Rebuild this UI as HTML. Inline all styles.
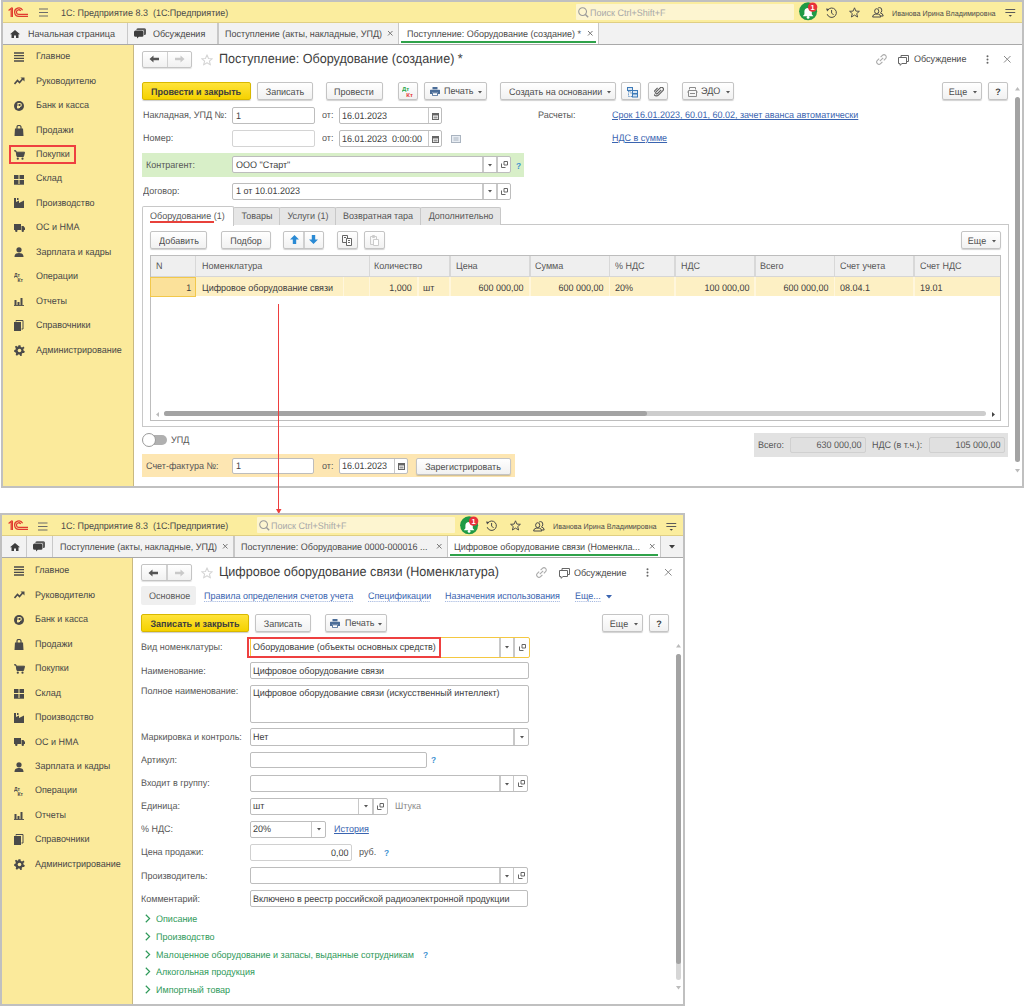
<!DOCTYPE html><html><head><meta charset="utf-8"><style>html,body{margin:0;padding:0;background:#fff;width:1024px;height:1006px;overflow:hidden;position:relative;font-family:"Liberation Sans",sans-serif}</style></head><body>
<div style="position:absolute;left:0px;top:0px;width:1024px;height:488px;background:#fff"></div>
<div style="position:absolute;left:1px;top:0px;width:1023px;height:2px;background:#c0c0c0"></div>
<div style="position:absolute;left:1px;top:0px;width:2px;height:488px;background:#c0c0c0"></div>
<div style="position:absolute;left:1022px;top:0px;width:2px;height:488px;background:#c0c0c0"></div>
<div style="position:absolute;left:1px;top:486px;width:1023px;height:2px;background:#c0c0c0"></div>
<div style="position:absolute;left:3px;top:2px;width:1019px;height:21px;background:#fbed9e"></div>
<div style="position:absolute;left:3px;top:22px;width:1019px;height:1px;background:#e0cf83"></div>
<svg style="position:absolute;left:7.75px;top:6.8px" width="21" height="11" viewBox="0 0 21 11"><g fill="none" stroke="#e03a2f" stroke-width="1.25"><path d="M0.6 3.4L3.2 1.3V10"/><path d="M4.4 .6V10"/><path d="M14.6 3.3A4.2 4.2 0 1 0 10.8 9.4H20"/><path d="M12.7 3.9A2.3 2.3 0 1 0 10.8 7.4H20"/></g></svg>
<svg style="position:absolute;left:38.75px;top:8.3px" width="9.5" height="9" viewBox="0 0 9.5 9"><g stroke="#6b6b6b" stroke-width="1.2"><path d="M0 1H9.5M0 4.5H9.5M0 8H9.5"/></g></svg>
<div style="position:absolute;left:61.25px;top:7.78px;font-size:9.495px;line-height:11.869px;color:#4a4a4a;font-weight:400;white-space:nowrap;;transform:scaleX(0.9479);text-rendering:geometricPrecision;transform-origin:0 0">1С: Предприятие 8.3&nbsp; (1С:Предприятие)</div>
<div style="position:absolute;left:576px;top:4px;width:218px;height:16px;background:#fdf5d0;border-radius:1px"></div>
<svg style="position:absolute;left:578.3px;top:7px" width="11" height="11" viewBox="0 0 11 11"><circle cx="4.6" cy="4.6" r="3.9" fill="none" stroke="#9a9a9a" stroke-width="1.05"/><path d="M7.4 7.4L10.2 10.2" stroke="#9a9a9a" stroke-width="1.4"/></svg>
<div style="position:absolute;left:590.1px;top:8.08px;font-size:9.495px;line-height:11.869px;color:#a8a8a8;font-weight:400;white-space:nowrap;;transform:scaleX(0.9479);text-rendering:geometricPrecision;transform-origin:0 0">Поиск Ctrl+Shift+F</div>
<svg style="position:absolute;left:799px;top:2.3px" width="20" height="20" viewBox="0 0 20 20"><circle cx="9.1" cy="9.3" r="9" fill="#1f9a45"/><path d="M3.8 14.2H14.4L12.8 12.3V9.6A3.7 3.7 0 0 0 5.4 9.6V12.3Z" fill="#fff"/><circle cx="9.1" cy="15.4" r="1.4" fill="#fff"/><circle cx="13.6" cy="5.1" r="4.7" fill="#e8303a"/><text x="13.6" y="7.7" font-size="7.5" font-weight="700" fill="#fff" text-anchor="middle" font-family="Liberation Sans">1</text></svg>
<svg style="position:absolute;left:826px;top:7.0px" width="12" height="12" viewBox="0 0 12 12"><g fill="none" stroke="#4a4a4a" stroke-width="1"><path d="M1.9 2.9A4.7 4.7 0 1 1 1.2 7.2"/><path d="M5.6 3V6L7.6 8"/></g><path d="M0 1.6L3.4 2.1L1.2 4.6Z" fill="#4a4a4a"/></svg>
<svg style="position:absolute;left:848.5px;top:6.8px" width="11" height="11" viewBox="0 0 11 11"><path d="M5.5 .8L6.9 4.1L10.4 4.3L7.7 6.6L8.6 10L5.5 8.1L2.4 10L3.3 6.6L.6 4.3L4.1 4.1Z" fill="none" stroke="#4a4a4a" stroke-width="0.95" stroke-linejoin="round"/></svg>
<svg style="position:absolute;left:871.5px;top:7.3px" width="12" height="11" viewBox="0 0 12 11"><g fill="none" stroke="#4a4a4a" stroke-width="1" stroke-linejoin="round"><path d="M2.6 4.3Q2.6 1.7 4.7 1.7Q6.8 1.7 6.8 4.3Q6.8 6.6 4.7 6.6Q2.6 6.6 2.6 4.3Z"/><path d="M.6 10Q.8 7.5 3.1 7.1H6.3Q8.6 7.5 8.8 10Z"/><path d="M6 1.2Q6.7 .6 7.6 .6Q9.8 .6 9.8 3.2Q9.8 5.5 8.4 5.9Q11 6.4 11.2 9H9"/></g></svg>
<div style="position:absolute;left:892px;top:9.12px;font-size:7.596px;line-height:9.495px;color:#4a4a4a;font-weight:400;white-space:nowrap;;transform:scaleX(0.9479);text-rendering:geometricPrecision;transform-origin:0 0">Иванова Ирина Владимировна</div>
<svg style="position:absolute;left:1005px;top:8.3px" width="11" height="10" viewBox="0 0 11 10"><g stroke="#5a5a5a" stroke-width="1.1" stroke-linecap="round"><path d="M.8 1.5H9.8M.8 4.5H9.8"/></g><path d="M3.6 7H7L5.3 8.8Z" fill="#444"/></svg>
<div style="position:absolute;left:3px;top:23px;width:1019px;height:22px;background:#f2f2f2"></div>
<div style="position:absolute;left:3px;top:44px;width:1019px;height:1px;background:#a9a9a9"></div>
<svg style="position:absolute;left:10px;top:30px" width="10" height="8" viewBox="0 0 10 8"><path d="M5 0L10 4.3H8.5V8H6V5.5H4V8H1.5V4.3H0Z" fill="#3d3d3d"/></svg>
<div style="position:absolute;left:27.75px;top:28.78px;font-size:9.495px;line-height:11.869px;color:#4a4a4a;font-weight:400;white-space:nowrap;;transform:scaleX(0.9479);text-rendering:geometricPrecision;transform-origin:0 0">Начальная страница</div>
<div style="position:absolute;left:127px;top:23px;width:1px;height:21px;background:#c8c8c8"></div>
<svg style="position:absolute;left:134px;top:28px" width="12" height="11" viewBox="0 0 12 11"><path d="M3.8 .3H10.5Q12 .3 12 1.8V5.6Q12 7.1 10.5 7.1H10V3.6Q10 2.1 8.5 2.1H2.3Q2.4 .3 3.8 .3Z" fill="#5a5a5a"/><path d="M1.5 2.6H8Q9.5 2.6 9.5 4.1V7.3Q9.5 8.8 8 8.8H4.8L3 10.6V8.8H1.5Q0 8.8 0 7.3V4.1Q0 2.6 1.5 2.6Z" fill="#3d3d3d"/></svg>
<div style="position:absolute;left:152.5px;top:28.78px;font-size:9.495px;line-height:11.869px;color:#4a4a4a;font-weight:400;white-space:nowrap;;transform:scaleX(0.9479);text-rendering:geometricPrecision;transform-origin:0 0">Обсуждения</div>
<div style="position:absolute;left:217px;top:23px;width:2px;height:21px;background:#c8c8c8"></div>
<div style="position:absolute;left:225px;top:28.78px;font-size:9.495px;line-height:11.869px;color:#4a4a4a;font-weight:400;white-space:nowrap;;transform:scaleX(0.9479);text-rendering:geometricPrecision;transform-origin:0 0">Поступление (акты, накладные, УПД)</div>
<svg style="position:absolute;left:387.25px;top:30.25px" width="6.5" height="6.5" viewBox="0 0 6.5 6.5"><path d="M1 1L5.5 5.5M5.5 1L1 5.5" stroke="#777" stroke-width="1"/></svg>
<div style="position:absolute;left:398px;top:23px;width:1px;height:21px;background:#c8c8c8"></div>
<div style="position:absolute;left:399px;top:23px;width:199px;height:21px;background:#fff"></div>
<div style="position:absolute;left:406.5px;top:28.78px;font-size:9.495px;line-height:11.869px;color:#4a4a4a;font-weight:400;white-space:nowrap;;transform:scaleX(0.9479);text-rendering:geometricPrecision;transform-origin:0 0">Поступление: Оборудование (создание) *</div>
<svg style="position:absolute;left:586.75px;top:30.25px" width="6.5" height="6.5" viewBox="0 0 6.5 6.5"><path d="M1 1L5.5 5.5M5.5 1L1 5.5" stroke="#777" stroke-width="1"/></svg>
<div style="position:absolute;left:401px;top:41px;width:195px;height:2px;background:#2fa24a"></div>
<div style="position:absolute;left:598px;top:23px;width:1px;height:21px;background:#c8c8c8"></div>
<div style="position:absolute;left:3px;top:45px;width:131px;height:441px;background:#fbea9b"></div>
<div style="position:absolute;left:133px;top:45px;width:1px;height:441px;background:#c9b981"></div>
<div style="position:absolute;left:35.75px;top:51.23px;font-size:9.495px;line-height:11.869px;color:#474747;font-weight:400;white-space:nowrap;;transform:scaleX(0.9479);text-rendering:geometricPrecision;transform-origin:0 0">Главное</div>
<svg style="position:absolute;left:14px;top:52.2px" width="10" height="10" viewBox="0 0 10 10"><g stroke="#4a4a4a" stroke-width="1.3"><path d="M0 1H10M0 3.7H10M0 6.3H10M0 9H10"/></g></svg>
<div style="position:absolute;left:35.75px;top:75.68px;font-size:9.495px;line-height:11.869px;color:#474747;font-weight:400;white-space:nowrap;;transform:scaleX(0.9479);text-rendering:geometricPrecision;transform-origin:0 0">Руководителю</div>
<svg style="position:absolute;left:14px;top:77.2px" width="11" height="8" viewBox="0 0 11 8"><path d="M0.5 7L3.5 3.5L5.5 5.5L9 1.5" fill="none" stroke="#4a4a4a" stroke-width="1.6"/><path d="M6.5 0.5H10.5V4.5Z" fill="#4a4a4a"/></svg>
<div style="position:absolute;left:35.75px;top:100.13px;font-size:9.495px;line-height:11.869px;color:#474747;font-weight:400;white-space:nowrap;;transform:scaleX(0.9479);text-rendering:geometricPrecision;transform-origin:0 0">Банк и касса</div>
<svg style="position:absolute;left:14px;top:100.7px" width="10" height="10" viewBox="0 0 10 10"><circle cx="5" cy="5" r="5" fill="#4a4a4a"/><path d="M4 7.8V2.5H5.8A1.5 1.5 0 0 1 5.8 5.5H3M3 6.5H6" stroke="#fbea9b" stroke-width="1.1" fill="none"/></svg>
<div style="position:absolute;left:35.75px;top:124.58px;font-size:9.495px;line-height:11.869px;color:#474747;font-weight:400;white-space:nowrap;;transform:scaleX(0.9479);text-rendering:geometricPrecision;transform-origin:0 0">Продажи</div>
<svg style="position:absolute;left:14px;top:124.6px" width="10" height="11" viewBox="0 0 10 11"><path d="M1 3.5H9L9.5 11H.5Z" fill="#4a4a4a"/><path d="M3 4V2A2 1.6 0 0 1 7 2V4" fill="none" stroke="#4a4a4a" stroke-width="1.2"/></svg>
<div style="position:absolute;left:35.75px;top:149.03px;font-size:9.495px;line-height:11.869px;color:#474747;font-weight:400;white-space:nowrap;;transform:scaleX(0.9479);text-rendering:geometricPrecision;transform-origin:0 0">Покупки</div>
<svg style="position:absolute;left:14px;top:149.6px" width="11" height="10" viewBox="0 0 11 10"><path d="M0 .8H2L3 6.5H9.5L10.5 2.2H2.5" fill="#4a4a4a" stroke="#4a4a4a" stroke-width="1"/><circle cx="3.8" cy="8.7" r="1.1" fill="#4a4a4a"/><circle cx="8.5" cy="8.7" r="1.1" fill="#4a4a4a"/></svg>
<div style="position:absolute;left:35.75px;top:173.48px;font-size:9.495px;line-height:11.869px;color:#474747;font-weight:400;white-space:nowrap;;transform:scaleX(0.9479);text-rendering:geometricPrecision;transform-origin:0 0">Склад</div>
<svg style="position:absolute;left:14px;top:174.5px" width="10" height="10" viewBox="0 0 10 10"><path d="M0 0H4.5V4H0ZM5.5 0H10V4H5.5ZM0 5H4.5V9H0ZM5.5 5H10V9H5.5Z" fill="#4a4a4a"/><path d="M0 9.6H10" stroke="#4a4a4a" stroke-width=".8"/></svg>
<div style="position:absolute;left:35.75px;top:197.93px;font-size:9.495px;line-height:11.869px;color:#474747;font-weight:400;white-space:nowrap;;transform:scaleX(0.9479);text-rendering:geometricPrecision;transform-origin:0 0">Производство</div>
<svg style="position:absolute;left:14px;top:198.4px" width="10" height="10" viewBox="0 0 10 10"><path d="M0 10V3L0 0H2V4L5 2.5V5L10 2.5V10Z" fill="#4a4a4a"/><rect x="3" y="0" width="1.5" height="2" fill="#4a4a4a"/></svg>
<div style="position:absolute;left:35.75px;top:222.38px;font-size:9.495px;line-height:11.869px;color:#474747;font-weight:400;white-space:nowrap;;transform:scaleX(0.9479);text-rendering:geometricPrecision;transform-origin:0 0">ОС и НМА</div>
<svg style="position:absolute;left:14px;top:223.9px" width="11" height="8" viewBox="0 0 11 8"><path d="M0 0H7V6H0ZM7.5 2H9.5L11 4V6H7.5Z" fill="#4a4a4a"/><circle cx="2.3" cy="6.8" r="1.2" fill="#4a4a4a"/><circle cx="8.8" cy="6.8" r="1.2" fill="#4a4a4a"/></svg>
<div style="position:absolute;left:35.75px;top:246.83px;font-size:9.495px;line-height:11.869px;color:#474747;font-weight:400;white-space:nowrap;;transform:scaleX(0.9479);text-rendering:geometricPrecision;transform-origin:0 0">Зарплата и кадры</div>
<svg style="position:absolute;left:14px;top:247.3px" width="10" height="10" viewBox="0 0 10 10"><circle cx="5" cy="2.8" r="2.6" fill="#4a4a4a"/><path d="M0.5 10C.5 6.8 2.5 6 5 6S9.5 6.8 9.5 10Z" fill="#4a4a4a"/></svg>
<div style="position:absolute;left:35.75px;top:271.28px;font-size:9.495px;line-height:11.869px;color:#474747;font-weight:400;white-space:nowrap;;transform:scaleX(0.9479);text-rendering:geometricPrecision;transform-origin:0 0">Операции</div>
<svg style="position:absolute;left:14px;top:271.8px" width="10" height="10" viewBox="0 0 10 10"><text x="0" y="4.5" font-size="5" font-family="Liberation Sans" fill="#4a4a4a" font-weight="700">Дт</text><text x="3.5" y="9.5" font-size="5" font-family="Liberation Sans" fill="#4a4a4a" font-weight="700">Кт</text></svg>
<div style="position:absolute;left:35.75px;top:295.73px;font-size:9.495px;line-height:11.869px;color:#474747;font-weight:400;white-space:nowrap;;transform:scaleX(0.9479);text-rendering:geometricPrecision;transform-origin:0 0">Отчеты</div>
<svg style="position:absolute;left:14px;top:296.8px" width="10" height="9" viewBox="0 0 10 9"><path d="M0.5 3H2.5V8H0.5ZM3.5 5H5.5V8H3.5ZM6.5 1H8.5V8H6.5Z" fill="#4a4a4a"/><path d="M0 8.6H10" stroke="#4a4a4a" stroke-width="1"/></svg>
<div style="position:absolute;left:35.75px;top:320.18px;font-size:9.495px;line-height:11.869px;color:#474747;font-weight:400;white-space:nowrap;;transform:scaleX(0.9479);text-rendering:geometricPrecision;transform-origin:0 0">Справочники</div>
<svg style="position:absolute;left:14px;top:320.2px" width="10" height="11" viewBox="0 0 10 11"><path d="M0 2H7V11H0Z" fill="#4a4a4a"/><path d="M2 1.5V.5H9V9H7.5" fill="none" stroke="#4a4a4a" stroke-width="1"/></svg>
<div style="position:absolute;left:35.75px;top:344.63px;font-size:9.495px;line-height:11.869px;color:#474747;font-weight:400;white-space:nowrap;;transform:scaleX(0.9479);text-rendering:geometricPrecision;transform-origin:0 0">Администрирование</div>
<svg style="position:absolute;left:14px;top:344.6px" width="11" height="11" viewBox="0 0 11 11"><g transform="translate(5.5 5.5)"><path d="M-1 -5.3H1L1.3 -3.6L2.6 -3L4 -4L5 -2.6L3.8 -1.4L4 0L5.4 1L4.6 2.6L3 2.4L2.2 3.6L2.4 5.2L.8 5.4L0 4L-1.4 4L-2.4 5.2L-3.8 4.4L-3.4 2.8L-4.2 1.8L-5.4 1.2L-5.2 -.6L-3.8 -1L-3.8 -2.6L-4.6 -3.8L-3.4 -4.8L-2 -3.8L-1.4 -4Z" fill="#4a4a4a"/><circle r="1.8" fill="#fbea9b"/></g></svg>
<div style="position:absolute;left:9px;top:145px;width:67px;height:19px;border:2px solid #ee4040;box-sizing:border-box"></div>
<div style="position:absolute;left:142px;top:51px;width:50px;height:17px;border:1px solid #c4c4c4;border-radius:2px;background:linear-gradient(#ffffff,#f1f1f1);box-shadow:0 1px 1px rgba(0,0,0,.12);box-sizing:border-box;"></div>
<div style="position:absolute;left:167px;top:52px;width:1px;height:15px;background:#d0d0d0"></div>
<svg style="position:absolute;left:149.25px;top:55.25px" width="11" height="8" viewBox="0 0 11 8"><path d="M0.5 4L4.5 0.5V2.8H10V5.2H4.5V7.5Z" fill="#555"/></svg>
<svg style="position:absolute;left:174.125px;top:55.25px" width="11" height="8" viewBox="0 0 11 8"><path d="M10.5 4L6.5 0.5V2.8H1V5.2H6.5V7.5Z" fill="#c9c9c9"/></svg>
<svg style="position:absolute;left:201px;top:53.5px" width="12" height="12" viewBox="0 0 11 11"><path d="M5.5 .8L6.9 4.1L10.4 4.3L7.7 6.6L8.6 10L5.5 8.1L2.4 10L3.3 6.6L.6 4.3L4.1 4.1Z" fill="none" stroke="#d5d5d5" stroke-width="1" stroke-linejoin="round"/></svg>
<div style="position:absolute;left:219.4px;top:51.09px;font-size:13.293px;line-height:16.616px;color:#3d3d3d;font-weight:400;white-space:nowrap;;transform:scaleX(0.9479);text-rendering:geometricPrecision;transform-origin:0 0">Поступление: Оборудование (создание) *</div>
<svg style="position:absolute;left:875.5px;top:54px" width="11" height="11" viewBox="0 0 11 11"><g fill="none" stroke="#aaa" stroke-width="1.1"><path d="M4.6 3.2L6.4 1.4A2 2 0 0 1 9.6 4.6L7.8 6.4"/><path d="M6.4 7.8L4.6 9.6A2 2 0 0 1 1.4 6.4L3.2 4.6"/><path d="M3.8 7.2L7.2 3.8"/></g></svg>
<svg style="position:absolute;left:898px;top:55px" width="11" height="11" viewBox="0 0 11 11"><g fill="none" stroke="#666" stroke-width="1"><path d="M3 2.5V.5H10.5V6.5H8.5"/><path d="M.5 2.5H8.5V8.5H4L2 10.3V8.5H.5Z"/></g></svg>
<div style="position:absolute;left:913.5px;top:54.08px;font-size:9.495px;line-height:11.869px;color:#4a4a4a;font-weight:400;white-space:nowrap;;transform:scaleX(0.9479);text-rendering:geometricPrecision;transform-origin:0 0">Обсуждение</div>
<svg style="position:absolute;left:986px;top:54.5px" width="3" height="9" viewBox="0 0 3 9"><circle cx="1.5" cy="1.2" r="1" fill="#666"/><circle cx="1.5" cy="4.5" r="1" fill="#666"/><circle cx="1.5" cy="7.8" r="1" fill="#666"/></svg>
<svg style="position:absolute;left:1003.25px;top:54.95px" width="8.5" height="8.5" viewBox="0 0 8.5 8.5"><path d="M1 1L7.5 7.5M7.5 1L1 7.5" stroke="#888" stroke-width="1"/></svg>
<div style="position:absolute;left:142px;top:82px;width:109px;height:18px;border:1px solid #d8b800;border-radius:2px;background:linear-gradient(#ffe33a,#f5d200);box-shadow:0 1px 1px rgba(0,0,0,.2);box-sizing:border-box;"></div>
<div style="position:absolute;left:-3.625px;width:400px;text-align:center;top:86.68px;font-size:9.495px;line-height:11.869px;color:#3d3d3d;font-weight:700;white-space:nowrap;;transform:scaleX(0.9479);text-rendering:geometricPrecision;transform-origin:50% 0">Провести и закрыть</div>
<div style="position:absolute;left:257px;top:82px;width:56px;height:18px;border:1px solid #c4c4c4;border-radius:2px;background:linear-gradient(#ffffff,#f1f1f1);box-shadow:0 1px 1px rgba(0,0,0,.18);box-sizing:border-box;"></div>
<div style="position:absolute;left:85.125px;width:400px;text-align:center;top:86.68px;font-size:9.495px;line-height:11.869px;color:#4d4d4d;font-weight:400;white-space:nowrap;;transform:scaleX(0.9479);text-rendering:geometricPrecision;transform-origin:50% 0">Записать</div>
<div style="position:absolute;left:326px;top:82px;width:57px;height:18px;border:1px solid #c4c4c4;border-radius:2px;background:linear-gradient(#ffffff,#f1f1f1);box-shadow:0 1px 1px rgba(0,0,0,.18);box-sizing:border-box;"></div>
<div style="position:absolute;left:154.375px;width:400px;text-align:center;top:86.68px;font-size:9.495px;line-height:11.869px;color:#4d4d4d;font-weight:400;white-space:nowrap;;transform:scaleX(0.9479);text-rendering:geometricPrecision;transform-origin:50% 0">Провести</div>
<div style="position:absolute;left:398px;top:82px;width:20px;height:18px;border:1px solid #c4c4c4;border-radius:2px;background:linear-gradient(#ffffff,#f1f1f1);box-shadow:0 1px 1px rgba(0,0,0,.18);box-sizing:border-box;"></div>
<svg style="position:absolute;left:401.5px;top:86px" width="13" height="12" viewBox="0 0 13 12"><text x="0" y="4.8" font-size="6" font-weight="700" font-family="Liberation Sans" fill="#2aa84a">Дт</text><text x="4.3" y="10.8" font-size="6" font-weight="700" font-family="Liberation Sans" fill="#e53935">Кт</text></svg>
<div style="position:absolute;left:424px;top:82px;width:63px;height:18px;border:1px solid #c4c4c4;border-radius:2px;background:linear-gradient(#ffffff,#f1f1f1);box-shadow:0 1px 1px rgba(0,0,0,.18);box-sizing:border-box;"></div>
<svg style="position:absolute;left:477.75px;top:90.95px" width="4" height="3" viewBox="0 0 4 3"><path d="M0 0H4L2 2.5Z" fill="#555"/></svg>
<svg style="position:absolute;left:429.5px;top:87.3px" width="10" height="9" viewBox="0 0 10 9"><path d="M2.5 0H7.5V2.3H2.5Z" fill="#4b6d98"/><path d="M0.5 2.8H9.5Q10 2.8 10 3.3V7H8V5.5H2V7H0V3.3Q0 2.8 .5 2.8Z" fill="#4b6d98"/><path d="M2.5 5.8H7.5V8.6H2.5Z" fill="#fff" stroke="#4b6d98" stroke-width=".9"/></svg>
<div style="position:absolute;left:443.8px;top:86.08px;font-size:9.495px;line-height:11.869px;color:#4d4d4d;font-weight:400;white-space:nowrap;;transform:scaleX(0.9479);text-rendering:geometricPrecision;transform-origin:0 0">Печать</div>
<div style="position:absolute;left:500px;top:82px;width:116px;height:18px;border:1px solid #c4c4c4;border-radius:2px;background:linear-gradient(#ffffff,#f1f1f1);box-shadow:0 1px 1px rgba(0,0,0,.18);box-sizing:border-box;"></div>
<div style="position:absolute;left:509px;top:86.68px;font-size:9.495px;line-height:11.869px;color:#4d4d4d;font-weight:400;white-space:nowrap;;transform:scaleX(0.9479);text-rendering:geometricPrecision;transform-origin:0 0">Создать на основании</div>
<svg style="position:absolute;left:607.0px;top:90.95px" width="4" height="3" viewBox="0 0 4 3"><path d="M0 0H4L2 2.5Z" fill="#555"/></svg>
<div style="position:absolute;left:621px;top:82px;width:20px;height:18px;border:1px solid #c4c4c4;border-radius:2px;background:linear-gradient(#ffffff,#f1f1f1);box-shadow:0 1px 1px rgba(0,0,0,.18);box-sizing:border-box;"></div>
<svg style="position:absolute;left:626.5px;top:86.5px" width="11" height="11" viewBox="0 0 11 11"><g fill="#d8e6f4" stroke="#3d7ab8" stroke-width="1"><rect x=".5" y=".5" width="5" height="3"/><rect x="5.5" y="3.5" width="5" height="3"/><rect x="5.5" y="7" width="5" height="3"/></g><path d="M1.5 4V9.5H5M3 4V6H5" fill="none" stroke="#3d7ab8" stroke-width=".8" stroke-dasharray="1 .6"/></svg>
<div style="position:absolute;left:648px;top:82px;width:20px;height:18px;border:1px solid #c4c4c4;border-radius:2px;background:linear-gradient(#ffffff,#f1f1f1);box-shadow:0 1px 1px rgba(0,0,0,.18);box-sizing:border-box;"></div>
<svg style="position:absolute;left:653.5px;top:87px" width="10" height="10" viewBox="0 0 10 10"><path d="M7.2 2.8L3.3 6.7A1.1 1.1 0 0 1 1.8 5.2L6.2 .9A1.9 1.9 0 0 1 8.9 3.6L4.4 8.1A2.8 2.8 0 0 1 .4 4.1L3.6 .9" fill="none" stroke="#5f5f5f" stroke-width="1.15"/></svg>
<div style="position:absolute;left:682px;top:82px;width:52px;height:18px;border:1px solid #c4c4c4;border-radius:2px;background:linear-gradient(#ffffff,#f1f1f1);box-shadow:0 1px 1px rgba(0,0,0,.18);box-sizing:border-box;"></div>
<svg style="position:absolute;left:725.5px;top:90.95px" width="4" height="3" viewBox="0 0 4 3"><path d="M0 0H4L2 2.5Z" fill="#555"/></svg>
<svg style="position:absolute;left:686.8px;top:86.5px" width="11" height="11" viewBox="0 0 11 11"><g fill="none" stroke="#8a8a8a" stroke-width="1"><path d="M2.5 .5H8.5V2.5"/><path d="M2.5 2.5V.5"/><path d="M1.5 3.5H9.5V9.5H1.5Z"/><path d="M3 6.5H8"/></g><path d="M0 5L2 3.6V6.4ZM11 5L9 3.6V6.4Z" fill="#8a8a8a"/></svg>
<div style="position:absolute;left:700.5px;top:86.08px;font-size:9.495px;line-height:11.869px;color:#4d4d4d;font-weight:400;white-space:nowrap;;transform:scaleX(0.9479);text-rendering:geometricPrecision;transform-origin:0 0">ЭДО</div>
<div style="position:absolute;left:942px;top:82px;width:40px;height:18px;border:1px solid #c4c4c4;border-radius:2px;background:linear-gradient(#ffffff,#f1f1f1);box-shadow:0 1px 1px rgba(0,0,0,.18);box-sizing:border-box;"></div>
<div style="position:absolute;left:758.0px;width:400px;text-align:center;top:86.68px;font-size:9.495px;line-height:11.869px;color:#4d4d4d;font-weight:400;white-space:nowrap;;transform:scaleX(0.9479);text-rendering:geometricPrecision;transform-origin:50% 0">Еще</div>
<svg style="position:absolute;left:973.0px;top:90.95px" width="4" height="3" viewBox="0 0 4 3"><path d="M0 0H4L2 2.5Z" fill="#555"/></svg>
<div style="position:absolute;left:988px;top:82px;width:20px;height:18px;border:1px solid #c4c4c4;border-radius:2px;background:linear-gradient(#ffffff,#f1f1f1);box-shadow:0 1px 1px rgba(0,0,0,.18);box-sizing:border-box;"></div>
<div style="position:absolute;left:798.25px;width:400px;text-align:center;top:86.68px;font-size:9.495px;line-height:11.869px;color:#3d3d3d;font-weight:700;white-space:nowrap;;transform:scaleX(0.9479);text-rendering:geometricPrecision;transform-origin:50% 0">?</div>
<svg style="position:absolute;left:1014.5px;top:87px" width="5" height="4" viewBox="0 0 5 4"><path d="M0 3.5H5L2.5 0Z" fill="#bbb"/></svg>
<div style="position:absolute;left:1015px;top:97px;width:5px;height:365px;background:#a3a3a3;border-radius:2.5px"></div>
<svg style="position:absolute;left:1014.5px;top:468.5px" width="5" height="4" viewBox="0 0 5 4"><path d="M0 0H5L2.5 3.5Z" fill="#bbb"/></svg>
<div style="position:absolute;left:142.5px;top:110.18px;font-size:9.495px;line-height:11.869px;color:#575757;font-weight:400;white-space:nowrap;;transform:scaleX(0.9479);text-rendering:geometricPrecision;transform-origin:0 0">Накладная, УПД №:</div>
<div style="position:absolute;left:232px;top:107px;width:83px;height:17px;border:1px solid #bdbdbd;border-radius:2px;background:#fff;box-sizing:border-box;"></div>
<div style="position:absolute;left:235.7px;top:110.58px;font-size:9.495px;line-height:11.869px;color:#404040;font-weight:400;white-space:nowrap;;transform:scaleX(0.9479);text-rendering:geometricPrecision;transform-origin:0 0">1</div>
<div style="position:absolute;left:321.5px;top:110.18px;font-size:9.495px;line-height:11.869px;color:#575757;font-weight:400;white-space:nowrap;;transform:scaleX(0.9479);text-rendering:geometricPrecision;transform-origin:0 0">от:</div>
<div style="position:absolute;left:339px;top:107px;width:103px;height:17px;border:1px solid #bdbdbd;border-radius:2px;background:#fff;box-sizing:border-box;"></div>
<div style="position:absolute;left:342.45px;top:110.58px;font-size:9.495px;line-height:11.869px;color:#404040;font-weight:400;white-space:nowrap;;transform:scaleX(0.9479);text-rendering:geometricPrecision;transform-origin:0 0">16.01.2023</div>
<div style="position:absolute;left:428px;top:108px;width:1px;height:15px;background:#c8c8c8"></div>
<svg style="position:absolute;left:431.625px;top:111.5px" width="7" height="8" viewBox="0 0 7 8"><rect x=".5" y="1.5" width="6" height="6" fill="none" stroke="#666"/><rect x=".5" y="1.5" width="6" height="2" fill="#666"/><rect x="1.5" y="4.5" width="4" height="2" fill="#999"/></svg>
<div style="position:absolute;left:537.75px;top:110.18px;font-size:9.495px;line-height:11.869px;color:#575757;font-weight:400;white-space:nowrap;;transform:scaleX(0.9479);text-rendering:geometricPrecision;transform-origin:0 0">Расчеты:</div>
<div style="position:absolute;left:611.5px;top:110.18px;font-size:9.495px;line-height:11.869px;color:#3a64b0;font-weight:400;white-space:nowrap;text-decoration:underline;transform:scaleX(0.9479);text-rendering:geometricPrecision;transform-origin:0 0">Срок 16.01.2023, 60.01, 60.02, зачет аванса автоматически</div>
<div style="position:absolute;left:142.5px;top:133.28px;font-size:9.495px;line-height:11.869px;color:#575757;font-weight:400;white-space:nowrap;;transform:scaleX(0.9479);text-rendering:geometricPrecision;transform-origin:0 0">Номер:</div>
<div style="position:absolute;left:232px;top:130px;width:83px;height:17px;border:1px solid #d4d4d4;border-radius:2px;background:#fff;box-sizing:border-box;"></div>
<div style="position:absolute;left:321.5px;top:133.28px;font-size:9.495px;line-height:11.869px;color:#575757;font-weight:400;white-space:nowrap;;transform:scaleX(0.9479);text-rendering:geometricPrecision;transform-origin:0 0">от:</div>
<div style="position:absolute;left:339px;top:130px;width:103px;height:17px;border:1px solid #bdbdbd;border-radius:2px;background:#fff;box-sizing:border-box;"></div>
<div style="position:absolute;left:342.45px;top:133.58px;font-size:9.495px;line-height:11.869px;color:#404040;font-weight:400;white-space:nowrap;;transform:scaleX(0.9479);text-rendering:geometricPrecision;transform-origin:0 0">16.01.2023&nbsp; 0:00:00</div>
<div style="position:absolute;left:428px;top:131px;width:1px;height:15px;background:#c8c8c8"></div>
<svg style="position:absolute;left:431.625px;top:134.5px" width="7" height="8" viewBox="0 0 7 8"><rect x=".5" y="1.5" width="6" height="6" fill="none" stroke="#666"/><rect x=".5" y="1.5" width="6" height="2" fill="#666"/><rect x="1.5" y="4.5" width="4" height="2" fill="#999"/></svg>
<svg style="position:absolute;left:451px;top:134.5px" width="10" height="8" viewBox="0 0 10 8"><rect x=".5" y=".5" width="9" height="7" fill="#e8edf3" stroke="#aab4c0"/><path d="M2.5 3H7.5M2.5 5H7.5" stroke="#aab4c0"/></svg>
<div style="position:absolute;left:611.5px;top:133.28px;font-size:9.495px;line-height:11.869px;color:#3a64b0;font-weight:400;white-space:nowrap;text-decoration:underline;transform:scaleX(0.9479);text-rendering:geometricPrecision;transform-origin:0 0">НДС в сумме</div>
<div style="position:absolute;left:142px;top:153px;width:382px;height:24px;background:#d8efc8"></div>
<div style="position:absolute;left:145.75px;top:159.98px;font-size:9.495px;line-height:11.869px;color:#575757;font-weight:400;white-space:nowrap;;transform:scaleX(0.9479);text-rendering:geometricPrecision;transform-origin:0 0">Контрагент:</div>
<div style="position:absolute;left:232px;top:156px;width:279px;height:17px;border:1px solid #bdbdbd;border-radius:2px;background:#fff;box-sizing:border-box;"></div>
<div style="position:absolute;left:235.7px;top:159.83px;font-size:9.495px;line-height:11.869px;color:#404040;font-weight:400;white-space:nowrap;;transform:scaleX(0.9479);text-rendering:geometricPrecision;transform-origin:0 0">ООО "Старт"</div>
<div style="position:absolute;left:482px;top:157px;width:2px;height:15px;background:#c8c8c8"></div>
<svg style="position:absolute;left:488.0px;top:163.8px" width="4" height="3" viewBox="0 0 4 3"><path d="M0 0H4L2 2.4Z" fill="#555"/></svg>
<div style="position:absolute;left:496px;top:157px;width:2px;height:15px;background:#c8c8c8"></div>
<svg style="position:absolute;left:500.75px;top:161.25px" width="7" height="7" viewBox="0 0 7 7"><path d="M3 .5H6.5V4H3Z M.5 2.5V6.5H4.5" fill="none" stroke="#666" stroke-width="1"/></svg>
<div style="position:absolute;left:515.6px;top:160.69px;font-size:8.757px;line-height:10.946px;color:#3a8fd0;font-weight:700;white-space:nowrap;;transform:scaleX(0.9479);text-rendering:geometricPrecision;transform-origin:0 0">?</div>
<div style="position:absolute;left:142.5px;top:186.28px;font-size:9.495px;line-height:11.869px;color:#575757;font-weight:400;white-space:nowrap;;transform:scaleX(0.9479);text-rendering:geometricPrecision;transform-origin:0 0">Договор:</div>
<div style="position:absolute;left:232px;top:183px;width:279px;height:17px;border:1px solid #bdbdbd;border-radius:2px;background:#fff;box-sizing:border-box;"></div>
<div style="position:absolute;left:235.7px;top:186.38px;font-size:9.495px;line-height:11.869px;color:#404040;font-weight:400;white-space:nowrap;;transform:scaleX(0.9479);text-rendering:geometricPrecision;transform-origin:0 0">1 от 10.01.2023</div>
<div style="position:absolute;left:482px;top:184px;width:2px;height:15px;background:#c8c8c8"></div>
<svg style="position:absolute;left:488.0px;top:190.35000000000002px" width="4" height="3" viewBox="0 0 4 3"><path d="M0 0H4L2 2.4Z" fill="#555"/></svg>
<div style="position:absolute;left:496px;top:184px;width:2px;height:15px;background:#c8c8c8"></div>
<svg style="position:absolute;left:500.75px;top:187.8px" width="7" height="7" viewBox="0 0 7 7"><path d="M3 .5H6.5V4H3Z M.5 2.5V6.5H4.5" fill="none" stroke="#666" stroke-width="1"/></svg>
<div style="position:absolute;left:142px;top:224px;width:867px;height:203px;border:1px solid #c8c8c8;box-sizing:border-box;background:#fff"></div>
<div style="position:absolute;left:233px;top:207px;width:47px;height:18px;background:#e6e6e6;border:1px solid #c8c8c8;border-bottom:none;box-sizing:border-box;border-radius:2px 2px 0 0"></div>
<div style="position:absolute;left:279px;top:207px;width:57px;height:18px;background:#e6e6e6;border:1px solid #c8c8c8;border-bottom:none;box-sizing:border-box;border-radius:2px 2px 0 0"></div>
<div style="position:absolute;left:335px;top:207px;width:86px;height:18px;background:#e6e6e6;border:1px solid #c8c8c8;border-bottom:none;box-sizing:border-box;border-radius:2px 2px 0 0"></div>
<div style="position:absolute;left:420px;top:207px;width:81px;height:18px;background:#e6e6e6;border:1px solid #c8c8c8;border-bottom:none;box-sizing:border-box;border-radius:2px 2px 0 0"></div>
<div style="position:absolute;left:142px;top:206px;width:92px;height:20px;background:#fff;border:1px solid #c8c8c8;border-bottom:none;box-sizing:border-box;border-radius:2px 2px 0 0"></div>
<div style="position:absolute;left:150px;top:210.78px;font-size:9.495px;line-height:11.869px;color:#575757;font-weight:400;white-space:nowrap;;transform:scaleX(0.9479);text-rendering:geometricPrecision;transform-origin:0 0">Оборудование (1)</div>
<div style="position:absolute;left:150px;top:221px;width:64px;height:2px;background:#e8413b"></div>
<div style="position:absolute;left:56.5px;width:400px;text-align:center;top:210.78px;font-size:9.495px;line-height:11.869px;color:#575757;font-weight:400;white-space:nowrap;;transform:scaleX(0.9479);text-rendering:geometricPrecision;transform-origin:50% 0">Товары</div>
<div style="position:absolute;left:107.5px;width:400px;text-align:center;top:210.78px;font-size:9.495px;line-height:11.869px;color:#575757;font-weight:400;white-space:nowrap;;transform:scaleX(0.9479);text-rendering:geometricPrecision;transform-origin:50% 0">Услуги (1)</div>
<div style="position:absolute;left:178px;width:400px;text-align:center;top:210.78px;font-size:9.495px;line-height:11.869px;color:#575757;font-weight:400;white-space:nowrap;;transform:scaleX(0.9479);text-rendering:geometricPrecision;transform-origin:50% 0">Возвратная тара</div>
<div style="position:absolute;left:260.75px;width:400px;text-align:center;top:210.78px;font-size:9.495px;line-height:11.869px;color:#575757;font-weight:400;white-space:nowrap;;transform:scaleX(0.9479);text-rendering:geometricPrecision;transform-origin:50% 0">Дополнительно</div>
<div style="position:absolute;left:150px;top:231px;width:57px;height:18px;border:1px solid #c4c4c4;border-radius:2px;background:linear-gradient(#ffffff,#f1f1f1);box-shadow:0 1px 1px rgba(0,0,0,.18);box-sizing:border-box;"></div>
<div style="position:absolute;left:-21.5px;width:400px;text-align:center;top:235.68px;font-size:9.495px;line-height:11.869px;color:#4d4d4d;font-weight:400;white-space:nowrap;;transform:scaleX(0.9479);text-rendering:geometricPrecision;transform-origin:50% 0">Добавить</div>
<div style="position:absolute;left:221px;top:231px;width:50px;height:18px;border:1px solid #c4c4c4;border-radius:2px;background:linear-gradient(#ffffff,#f1f1f1);box-shadow:0 1px 1px rgba(0,0,0,.18);box-sizing:border-box;"></div>
<div style="position:absolute;left:45.875px;width:400px;text-align:center;top:235.68px;font-size:9.495px;line-height:11.869px;color:#4d4d4d;font-weight:400;white-space:nowrap;;transform:scaleX(0.9479);text-rendering:geometricPrecision;transform-origin:50% 0">Подбор</div>
<div style="position:absolute;left:283px;top:231px;width:41px;height:18px;border:1px solid #c4c4c4;border-radius:2px;background:linear-gradient(#ffffff,#f1f1f1);box-shadow:0 1px 1px rgba(0,0,0,.18);box-sizing:border-box;"></div>
<div style="position:absolute;left:303px;top:232px;width:2px;height:16px;background:#d0d0d0"></div>
<svg style="position:absolute;left:289.5px;top:235px" width="9" height="9" viewBox="0 0 9 9"><path d="M4.5 0L9 4.5H6.2V9H2.8V4.5H0Z" fill="#2a8ad4"/></svg>
<svg style="position:absolute;left:309px;top:235px" width="9" height="9" viewBox="0 0 9 9"><path d="M4.5 9L9 4.5H6.2V0H2.8V4.5H0Z" fill="#2a8ad4"/></svg>
<div style="position:absolute;left:337px;top:231px;width:21px;height:18px;border:1px solid #c4c4c4;border-radius:2px;background:linear-gradient(#ffffff,#f1f1f1);box-shadow:0 1px 1px rgba(0,0,0,.18);box-sizing:border-box;"></div>
<svg style="position:absolute;left:342px;top:235px" width="11" height="11" viewBox="0 0 11 11"><g fill="none" stroke="#666" stroke-width="1"><path d="M.5 .5H5.5V7.5H.5Z"/><path d="M4.5 3.5H9.5V10.5H4.5Z" fill="#fff"/><path d="M2 2.5H4M6 5.5H8M6 7.5H8"/></g></svg>
<div style="position:absolute;left:364px;top:231px;width:21px;height:18px;border:1px solid #c4c4c4;border-radius:2px;background:linear-gradient(#ffffff,#f1f1f1);box-shadow:0 1px 1px rgba(0,0,0,.18);box-sizing:border-box;"></div>
<svg style="position:absolute;left:369px;top:235px" width="11" height="11" viewBox="0 0 11 11"><g fill="none" stroke="#ccc" stroke-width="1"><path d="M1.5 1.5H7.5V9.5H1.5Z"/><path d="M3.5 .5H5.5V2.5H3.5Z"/><path d="M4.5 4.5H9.5V10.5H4.5Z" fill="#fff"/></g></svg>
<div style="position:absolute;left:961px;top:231px;width:40px;height:18px;border:1px solid #c4c4c4;border-radius:2px;background:linear-gradient(#ffffff,#f1f1f1);box-shadow:0 1px 1px rgba(0,0,0,.18);box-sizing:border-box;"></div>
<div style="position:absolute;left:776.75px;width:400px;text-align:center;top:235.68px;font-size:9.495px;line-height:11.869px;color:#4d4d4d;font-weight:400;white-space:nowrap;;transform:scaleX(0.9479);text-rendering:geometricPrecision;transform-origin:50% 0">Еще</div>
<svg style="position:absolute;left:991.75px;top:239.95px" width="4" height="3" viewBox="0 0 4 3"><path d="M0 0H4L2 2.5Z" fill="#555"/></svg>
<div style="position:absolute;left:150px;top:255px;width:851px;height:166px;border:1px solid #bdbdbd;box-sizing:border-box;background:#fff"></div>
<div style="position:absolute;left:151px;top:256px;width:849px;height:21px;background:#efefef"></div>
<div style="position:absolute;left:151px;top:276px;width:849px;height:1px;background:#d6d6d6"></div>
<div style="position:absolute;left:195px;top:256px;width:1px;height:20px;background:#d8d8d8"></div>
<div style="position:absolute;left:369px;top:256px;width:1px;height:20px;background:#d8d8d8"></div>
<div style="position:absolute;left:449px;top:256px;width:2px;height:20px;background:#d8d8d8"></div>
<div style="position:absolute;left:529px;top:256px;width:2px;height:20px;background:#d8d8d8"></div>
<div style="position:absolute;left:609px;top:256px;width:1px;height:20px;background:#d8d8d8"></div>
<div style="position:absolute;left:674px;top:256px;width:2px;height:20px;background:#d8d8d8"></div>
<div style="position:absolute;left:754px;top:256px;width:2px;height:20px;background:#d8d8d8"></div>
<div style="position:absolute;left:834px;top:256px;width:1px;height:20px;background:#d8d8d8"></div>
<div style="position:absolute;left:913px;top:256px;width:2px;height:20px;background:#d8d8d8"></div>
<div style="position:absolute;left:151px;top:277px;width:849px;height:19px;background:#fdf0c4"></div>
<div style="position:absolute;left:195px;top:277px;width:1px;height:19px;background:#fff6dc"></div>
<div style="position:absolute;left:369px;top:277px;width:1px;height:19px;background:#fff6dc"></div>
<div style="position:absolute;left:449px;top:277px;width:2px;height:19px;background:#fff6dc"></div>
<div style="position:absolute;left:529px;top:277px;width:2px;height:19px;background:#fff6dc"></div>
<div style="position:absolute;left:609px;top:277px;width:1px;height:19px;background:#fff6dc"></div>
<div style="position:absolute;left:674px;top:277px;width:2px;height:19px;background:#fff6dc"></div>
<div style="position:absolute;left:754px;top:277px;width:2px;height:19px;background:#fff6dc"></div>
<div style="position:absolute;left:834px;top:277px;width:1px;height:19px;background:#fff6dc"></div>
<div style="position:absolute;left:913px;top:277px;width:2px;height:19px;background:#fff6dc"></div>
<div style="position:absolute;left:343px;top:277px;width:1px;height:19px;background:#fff6dc"></div>
<div style="position:absolute;left:417px;top:277px;width:2px;height:19px;background:#fff6dc"></div>
<div style="position:absolute;left:150px;top:277px;width:46px;height:20px;background:#fbe19a;border:1px solid #f2c84b;box-sizing:border-box"></div>
<div style="position:absolute;left:155.5px;top:260.98px;font-size:9.495px;line-height:11.869px;color:#575757;font-weight:400;white-space:nowrap;;transform:scaleX(0.9479);text-rendering:geometricPrecision;transform-origin:0 0">N</div>
<div style="position:absolute;left:201.75px;top:260.98px;font-size:9.495px;line-height:11.869px;color:#575757;font-weight:400;white-space:nowrap;;transform:scaleX(0.9479);text-rendering:geometricPrecision;transform-origin:0 0">Номенклатура</div>
<div style="position:absolute;left:374px;top:260.98px;font-size:9.495px;line-height:11.869px;color:#575757;font-weight:400;white-space:nowrap;;transform:scaleX(0.9479);text-rendering:geometricPrecision;transform-origin:0 0">Количество</div>
<div style="position:absolute;left:455.75px;top:260.98px;font-size:9.495px;line-height:11.869px;color:#575757;font-weight:400;white-space:nowrap;;transform:scaleX(0.9479);text-rendering:geometricPrecision;transform-origin:0 0">Цена</div>
<div style="position:absolute;left:535.25px;top:260.98px;font-size:9.495px;line-height:11.869px;color:#575757;font-weight:400;white-space:nowrap;;transform:scaleX(0.9479);text-rendering:geometricPrecision;transform-origin:0 0">Сумма</div>
<div style="position:absolute;left:615px;top:260.98px;font-size:9.495px;line-height:11.869px;color:#575757;font-weight:400;white-space:nowrap;;transform:scaleX(0.9479);text-rendering:geometricPrecision;transform-origin:0 0">% НДС</div>
<div style="position:absolute;left:680.75px;top:260.98px;font-size:9.495px;line-height:11.869px;color:#575757;font-weight:400;white-space:nowrap;;transform:scaleX(0.9479);text-rendering:geometricPrecision;transform-origin:0 0">НДС</div>
<div style="position:absolute;left:760.25px;top:260.98px;font-size:9.495px;line-height:11.869px;color:#575757;font-weight:400;white-space:nowrap;;transform:scaleX(0.9479);text-rendering:geometricPrecision;transform-origin:0 0">Всего</div>
<div style="position:absolute;left:839.5px;top:260.98px;font-size:9.495px;line-height:11.869px;color:#575757;font-weight:400;white-space:nowrap;;transform:scaleX(0.9479);text-rendering:geometricPrecision;transform-origin:0 0">Счет учета</div>
<div style="position:absolute;left:919.5px;top:260.98px;font-size:9.495px;line-height:11.869px;color:#575757;font-weight:400;white-space:nowrap;;transform:scaleX(0.9479);text-rendering:geometricPrecision;transform-origin:0 0">Счет НДС</div>
<div style="position:absolute;right:833px;text-align:right;top:282.68px;font-size:9.495px;line-height:11.869px;color:#3d3d3d;font-weight:400;white-space:nowrap;;transform:scaleX(0.9479);text-rendering:geometricPrecision;transform-origin:100% 0">1</div>
<div style="position:absolute;left:201.75px;top:282.68px;font-size:9.495px;line-height:11.869px;color:#3d3d3d;font-weight:400;white-space:nowrap;;transform:scaleX(0.9479);text-rendering:geometricPrecision;transform-origin:0 0">Цифровое оборудование связи</div>
<div style="position:absolute;right:612.5px;text-align:right;top:282.68px;font-size:9.495px;line-height:11.869px;color:#3d3d3d;font-weight:400;white-space:nowrap;;transform:scaleX(0.9479);text-rendering:geometricPrecision;transform-origin:100% 0">1,000</div>
<div style="position:absolute;left:423.25px;top:282.68px;font-size:9.495px;line-height:11.869px;color:#3d3d3d;font-weight:400;white-space:nowrap;;transform:scaleX(0.9479);text-rendering:geometricPrecision;transform-origin:0 0">шт</div>
<div style="position:absolute;right:500.25px;text-align:right;top:282.68px;font-size:9.495px;line-height:11.869px;color:#3d3d3d;font-weight:400;white-space:nowrap;;transform:scaleX(0.9479);text-rendering:geometricPrecision;transform-origin:100% 0">600 000,00</div>
<div style="position:absolute;right:420.75px;text-align:right;top:282.68px;font-size:9.495px;line-height:11.869px;color:#3d3d3d;font-weight:400;white-space:nowrap;;transform:scaleX(0.9479);text-rendering:geometricPrecision;transform-origin:100% 0">600 000,00</div>
<div style="position:absolute;left:615px;top:282.68px;font-size:9.495px;line-height:11.869px;color:#3d3d3d;font-weight:400;white-space:nowrap;;transform:scaleX(0.9479);text-rendering:geometricPrecision;transform-origin:0 0">20%</div>
<div style="position:absolute;right:275px;text-align:right;top:282.68px;font-size:9.495px;line-height:11.869px;color:#3d3d3d;font-weight:400;white-space:nowrap;;transform:scaleX(0.9479);text-rendering:geometricPrecision;transform-origin:100% 0">100 000,00</div>
<div style="position:absolute;right:195.75px;text-align:right;top:282.68px;font-size:9.495px;line-height:11.869px;color:#3d3d3d;font-weight:400;white-space:nowrap;;transform:scaleX(0.9479);text-rendering:geometricPrecision;transform-origin:100% 0">600 000,00</div>
<div style="position:absolute;left:839.5px;top:282.68px;font-size:9.495px;line-height:11.869px;color:#3d3d3d;font-weight:400;white-space:nowrap;;transform:scaleX(0.9479);text-rendering:geometricPrecision;transform-origin:0 0">08.04.1</div>
<div style="position:absolute;left:919.5px;top:282.68px;font-size:9.495px;line-height:11.869px;color:#3d3d3d;font-weight:400;white-space:nowrap;;transform:scaleX(0.9479);text-rendering:geometricPrecision;transform-origin:0 0">19.01</div>
<svg style="position:absolute;left:156px;top:411.5px" width="3" height="5" viewBox="0 0 3 5"><path d="M3 0V5L0 2.5Z" fill="#bbb"/></svg>
<div style="position:absolute;left:164px;top:411px;width:822px;height:5px;background:#cdcdcd;border-radius:2.5px"></div>
<div style="position:absolute;left:164px;top:411px;width:483px;height:5px;background:#a3a3a3;border-radius:2.5px"></div>
<svg style="position:absolute;left:992px;top:411.5px" width="3" height="5" viewBox="0 0 3 5"><path d="M0 0V5L3 2.5Z" fill="#444"/></svg>
<div style="position:absolute;left:146px;top:435px;width:21px;height:10px;background:#b0b0b0;border-radius:5px"></div>
<div style="position:absolute;left:142px;top:433px;width:14px;height:14px;background:#fff;border:1px solid #9a9a9a;border-radius:50%;box-sizing:border-box"></div>
<div style="position:absolute;left:171px;top:435.28px;font-size:9.495px;line-height:11.869px;color:#575757;font-weight:400;white-space:nowrap;;transform:scaleX(0.9479);text-rendering:geometricPrecision;transform-origin:0 0">УПД</div>
<div style="position:absolute;left:754px;top:433px;width:254px;height:24px;background:#e2e2e2"></div>
<div style="position:absolute;left:757.7px;top:440.08px;font-size:9.495px;line-height:11.869px;color:#575757;font-weight:400;white-space:nowrap;;transform:scaleX(0.9479);text-rendering:geometricPrecision;transform-origin:0 0">Всего:</div>
<div style="position:absolute;left:790px;top:437px;width:76px;height:16px;background:#e0e0e0;border:1px solid #d0d0d0;border-radius:2px;box-sizing:border-box"></div>
<div style="position:absolute;right:162.5px;text-align:right;top:440.08px;font-size:9.495px;line-height:11.869px;color:#575757;font-weight:400;white-space:nowrap;;transform:scaleX(0.9479);text-rendering:geometricPrecision;transform-origin:100% 0">630 000,00</div>
<div style="position:absolute;left:872.3px;top:440.08px;font-size:9.495px;line-height:11.869px;color:#575757;font-weight:400;white-space:nowrap;;transform:scaleX(0.9479);text-rendering:geometricPrecision;transform-origin:0 0">НДС (в т.ч.):</div>
<div style="position:absolute;left:929px;top:437px;width:76px;height:16px;background:#e0e0e0;border:1px solid #d0d0d0;border-radius:2px;box-sizing:border-box"></div>
<div style="position:absolute;right:23.600000000000023px;text-align:right;top:440.08px;font-size:9.495px;line-height:11.869px;color:#575757;font-weight:400;white-space:nowrap;;transform:scaleX(0.9479);text-rendering:geometricPrecision;transform-origin:100% 0">105 000,00</div>
<div style="position:absolute;left:142px;top:454px;width:373px;height:23px;background:#fde6b2"></div>
<div style="position:absolute;left:146px;top:461.08px;font-size:9.495px;line-height:11.869px;color:#575757;font-weight:400;white-space:nowrap;;transform:scaleX(0.9479);text-rendering:geometricPrecision;transform-origin:0 0">Счет-фактура №:</div>
<div style="position:absolute;left:232px;top:458px;width:82px;height:16px;border:1px solid #bdbdbd;border-radius:2px;background:#fff;box-sizing:border-box;"></div>
<div style="position:absolute;left:235.7px;top:461.33px;font-size:9.495px;line-height:11.869px;color:#404040;font-weight:400;white-space:nowrap;;transform:scaleX(0.9479);text-rendering:geometricPrecision;transform-origin:0 0">1</div>
<div style="position:absolute;left:321.5px;top:461.08px;font-size:9.495px;line-height:11.869px;color:#575757;font-weight:400;white-space:nowrap;;transform:scaleX(0.9479);text-rendering:geometricPrecision;transform-origin:0 0">от:</div>
<div style="position:absolute;left:339px;top:458px;width:69px;height:16px;border:1px solid #bdbdbd;border-radius:2px;background:#fff;box-sizing:border-box;"></div>
<div style="position:absolute;left:342.45px;top:461.33px;font-size:9.495px;line-height:11.869px;color:#404040;font-weight:400;white-space:nowrap;;transform:scaleX(0.9479);text-rendering:geometricPrecision;transform-origin:0 0">16.01.2023</div>
<div style="position:absolute;left:394px;top:459px;width:1px;height:14px;background:#c8c8c8"></div>
<svg style="position:absolute;left:397.625px;top:462.25px" width="7" height="8" viewBox="0 0 7 8"><rect x=".5" y="1.5" width="6" height="6" fill="none" stroke="#666"/><rect x=".5" y="1.5" width="6" height="2" fill="#666"/><rect x="1.5" y="4.5" width="4" height="2" fill="#999"/></svg>
<div style="position:absolute;left:416px;top:458px;width:95px;height:17px;border:1px solid #c4c4c4;border-radius:2px;background:linear-gradient(#ffffff,#f1f1f1);box-shadow:0 1px 1px rgba(0,0,0,.18);box-sizing:border-box;"></div>
<div style="position:absolute;left:263.375px;width:400px;text-align:center;top:461.80px;font-size:9.495px;line-height:11.869px;color:#4d4d4d;font-weight:400;white-space:nowrap;;transform:scaleX(0.9479);text-rendering:geometricPrecision;transform-origin:50% 0">Зарегистрировать</div>
<div style="position:absolute;left:278px;top:304px;width:1px;height:207px;background:#ee3e3e"></div>
<svg style="position:absolute;left:276px;top:509px" width="5.5" height="5" viewBox="0 0 5.5 5"><path d="M0 0H5.5L2.75 5Z" fill="#ee3e3e"/></svg>
<div style="position:absolute;left:0px;top:513px;width:685px;height:493px;background:#fff"></div>
<div style="position:absolute;left:0px;top:513px;width:685px;height:2px;background:#c0c0c0"></div>
<div style="position:absolute;left:0px;top:513px;width:2px;height:493px;background:#c0c0c0"></div>
<div style="position:absolute;left:683px;top:513px;width:2px;height:493px;background:#c0c0c0"></div>
<div style="position:absolute;left:0px;top:1004px;width:685px;height:2px;background:#c0c0c0"></div>
<div style="position:absolute;left:2px;top:515px;width:681px;height:21px;background:#fbed9e"></div>
<div style="position:absolute;left:2px;top:535px;width:681px;height:1px;background:#e0cf83"></div>
<svg style="position:absolute;left:7.5px;top:520px" width="21" height="11" viewBox="0 0 21 11"><g fill="none" stroke="#e03a2f" stroke-width="1.25"><path d="M0.6 3.4L3.2 1.3V10"/><path d="M4.4 .6V10"/><path d="M14.6 3.3A4.2 4.2 0 1 0 10.8 9.4H20"/><path d="M12.7 3.9A2.3 2.3 0 1 0 10.8 7.4H20"/></g></svg>
<svg style="position:absolute;left:38px;top:521.5px" width="9.5" height="9" viewBox="0 0 9.5 9"><g stroke="#6b6b6b" stroke-width="1.2"><path d="M0 1H9.5M0 4.5H9.5M0 8H9.5"/></g></svg>
<div style="position:absolute;left:60.5px;top:520.78px;font-size:9.495px;line-height:11.869px;color:#4a4a4a;font-weight:400;white-space:nowrap;;transform:scaleX(0.9479);text-rendering:geometricPrecision;transform-origin:0 0">1С: Предприятие 8.3&nbsp; (1С:Предприятие)</div>
<div style="position:absolute;left:257px;top:517px;width:198px;height:16px;background:#fdf5d0;border-radius:1px"></div>
<svg style="position:absolute;left:258.8px;top:520px" width="11" height="11" viewBox="0 0 11 11"><circle cx="4.6" cy="4.6" r="3.9" fill="none" stroke="#9a9a9a" stroke-width="1.05"/><path d="M7.4 7.4L10.2 10.2" stroke="#9a9a9a" stroke-width="1.4"/></svg>
<div style="position:absolute;left:270.6px;top:521.08px;font-size:9.495px;line-height:11.869px;color:#a8a8a8;font-weight:400;white-space:nowrap;;transform:scaleX(0.9479);text-rendering:geometricPrecision;transform-origin:0 0">Поиск Ctrl+Shift+F</div>
<svg style="position:absolute;left:460px;top:515.5px" width="20" height="20" viewBox="0 0 20 20"><circle cx="9.1" cy="9.3" r="9" fill="#1f9a45"/><path d="M3.8 14.2H14.4L12.8 12.3V9.6A3.7 3.7 0 0 0 5.4 9.6V12.3Z" fill="#fff"/><circle cx="9.1" cy="15.4" r="1.4" fill="#fff"/><circle cx="13.6" cy="5.1" r="4.7" fill="#e8303a"/><text x="13.6" y="7.7" font-size="7.5" font-weight="700" fill="#fff" text-anchor="middle" font-family="Liberation Sans">1</text></svg>
<svg style="position:absolute;left:486px;top:520.2px" width="12" height="12" viewBox="0 0 12 12"><g fill="none" stroke="#4a4a4a" stroke-width="1"><path d="M1.9 2.9A4.7 4.7 0 1 1 1.2 7.2"/><path d="M5.6 3V6L7.6 8"/></g><path d="M0 1.6L3.4 2.1L1.2 4.6Z" fill="#4a4a4a"/></svg>
<svg style="position:absolute;left:509.5px;top:520px" width="11" height="11" viewBox="0 0 11 11"><path d="M5.5 .8L6.9 4.1L10.4 4.3L7.7 6.6L8.6 10L5.5 8.1L2.4 10L3.3 6.6L.6 4.3L4.1 4.1Z" fill="none" stroke="#4a4a4a" stroke-width="0.95" stroke-linejoin="round"/></svg>
<svg style="position:absolute;left:532.5px;top:520.5px" width="12" height="11" viewBox="0 0 12 11"><g fill="none" stroke="#4a4a4a" stroke-width="1" stroke-linejoin="round"><path d="M2.6 4.3Q2.6 1.7 4.7 1.7Q6.8 1.7 6.8 4.3Q6.8 6.6 4.7 6.6Q2.6 6.6 2.6 4.3Z"/><path d="M.6 10Q.8 7.5 3.1 7.1H6.3Q8.6 7.5 8.8 10Z"/><path d="M6 1.2Q6.7 .6 7.6 .6Q9.8 .6 9.8 3.2Q9.8 5.5 8.4 5.9Q11 6.4 11.2 9H9"/></g></svg>
<div style="position:absolute;left:552.5px;top:522.12px;font-size:7.596px;line-height:9.495px;color:#4a4a4a;font-weight:400;white-space:nowrap;;transform:scaleX(0.9479);text-rendering:geometricPrecision;transform-origin:0 0">Иванова Ирина Владимировна</div>
<svg style="position:absolute;left:666px;top:521.5px" width="11" height="10" viewBox="0 0 11 10"><g stroke="#5a5a5a" stroke-width="1.1" stroke-linecap="round"><path d="M.8 1.5H9.8M.8 4.5H9.8"/></g><path d="M3.6 7H7L5.3 8.8Z" fill="#444"/></svg>
<div style="position:absolute;left:2px;top:536px;width:681px;height:22px;background:#f2f2f2"></div>
<div style="position:absolute;left:2px;top:557px;width:681px;height:1px;background:#a9a9a9"></div>
<svg style="position:absolute;left:9.5px;top:543px" width="10" height="8" viewBox="0 0 10 8"><path d="M5 0L10 4.3H8.5V8H6V5.5H4V8H1.5V4.3H0Z" fill="#3d3d3d"/></svg>
<div style="position:absolute;left:26px;top:536px;width:1px;height:21px;background:#c8c8c8"></div>
<svg style="position:absolute;left:33px;top:541px" width="12" height="11" viewBox="0 0 12 11"><path d="M3.8 .3H10.5Q12 .3 12 1.8V5.6Q12 7.1 10.5 7.1H10V3.6Q10 2.1 8.5 2.1H2.3Q2.4 .3 3.8 .3Z" fill="#5a5a5a"/><path d="M1.5 2.6H8Q9.5 2.6 9.5 4.1V7.3Q9.5 8.8 8 8.8H4.8L3 10.6V8.8H1.5Q0 8.8 0 7.3V4.1Q0 2.6 1.5 2.6Z" fill="#3d3d3d"/></svg>
<div style="position:absolute;left:52px;top:536px;width:1px;height:21px;background:#c8c8c8"></div>
<div style="position:absolute;left:59.5px;top:541.78px;font-size:9.495px;line-height:11.869px;color:#4a4a4a;font-weight:400;white-space:nowrap;;transform:scaleX(0.9479);text-rendering:geometricPrecision;transform-origin:0 0">Поступление (акты, накладные, УПД)</div>
<svg style="position:absolute;left:222.25px;top:543.25px" width="6.5" height="6.5" viewBox="0 0 6.5 6.5"><path d="M1 1L5.5 5.5M5.5 1L1 5.5" stroke="#777" stroke-width="1"/></svg>
<div style="position:absolute;left:233px;top:536px;width:2px;height:21px;background:#c8c8c8"></div>
<div style="position:absolute;left:241px;top:541.78px;font-size:9.495px;line-height:11.869px;color:#4a4a4a;font-weight:400;white-space:nowrap;;transform:scaleX(0.9479);text-rendering:geometricPrecision;transform-origin:0 0">Поступление: Оборудование 0000-000016 ...</div>
<svg style="position:absolute;left:435.75px;top:543.25px" width="6.5" height="6.5" viewBox="0 0 6.5 6.5"><path d="M1 1L5.5 5.5M5.5 1L1 5.5" stroke="#777" stroke-width="1"/></svg>
<div style="position:absolute;left:447px;top:536px;width:1px;height:21px;background:#c8c8c8"></div>
<div style="position:absolute;left:448px;top:536px;width:212px;height:21px;background:#fff"></div>
<div style="position:absolute;left:454px;top:541.78px;font-size:9.495px;line-height:11.869px;color:#4a4a4a;font-weight:400;white-space:nowrap;;transform:scaleX(0.9479);text-rendering:geometricPrecision;transform-origin:0 0">Цифровое оборудование связи (Номенкла...</div>
<svg style="position:absolute;left:649.25px;top:543.25px" width="6.5" height="6.5" viewBox="0 0 6.5 6.5"><path d="M1 1L5.5 5.5M5.5 1L1 5.5" stroke="#777" stroke-width="1"/></svg>
<div style="position:absolute;left:450px;top:554px;width:208px;height:2px;background:#2fa24a"></div>
<div style="position:absolute;left:660px;top:536px;width:1px;height:21px;background:#c8c8c8"></div>
<svg style="position:absolute;left:668.5px;top:545.3px" width="6" height="4" viewBox="0 0 6 4"><path d="M0 0H6L3 3.5Z" fill="#3d3d3d"/></svg>
<div style="position:absolute;left:2px;top:558px;width:131px;height:446px;background:#fbea9b"></div>
<div style="position:absolute;left:132px;top:558px;width:1px;height:446px;background:#c9b981"></div>
<div style="position:absolute;left:34.5px;top:565.38px;font-size:9.495px;line-height:11.869px;color:#474747;font-weight:400;white-space:nowrap;;transform:scaleX(0.9479);text-rendering:geometricPrecision;transform-origin:0 0">Главное</div>
<svg style="position:absolute;left:13.75px;top:566.4px" width="10" height="10" viewBox="0 0 10 10"><g stroke="#4a4a4a" stroke-width="1.3"><path d="M0 1H10M0 3.7H10M0 6.3H10M0 9H10"/></g></svg>
<div style="position:absolute;left:34.5px;top:589.83px;font-size:9.495px;line-height:11.869px;color:#474747;font-weight:400;white-space:nowrap;;transform:scaleX(0.9479);text-rendering:geometricPrecision;transform-origin:0 0">Руководителю</div>
<svg style="position:absolute;left:13.75px;top:591.4px" width="11" height="8" viewBox="0 0 11 8"><path d="M0.5 7L3.5 3.5L5.5 5.5L9 1.5" fill="none" stroke="#4a4a4a" stroke-width="1.6"/><path d="M6.5 0.5H10.5V4.5Z" fill="#4a4a4a"/></svg>
<div style="position:absolute;left:34.5px;top:614.28px;font-size:9.495px;line-height:11.869px;color:#474747;font-weight:400;white-space:nowrap;;transform:scaleX(0.9479);text-rendering:geometricPrecision;transform-origin:0 0">Банк и касса</div>
<svg style="position:absolute;left:13.75px;top:614.8px" width="10" height="10" viewBox="0 0 10 10"><circle cx="5" cy="5" r="5" fill="#4a4a4a"/><path d="M4 7.8V2.5H5.8A1.5 1.5 0 0 1 5.8 5.5H3M3 6.5H6" stroke="#fbea9b" stroke-width="1.1" fill="none"/></svg>
<div style="position:absolute;left:34.5px;top:638.73px;font-size:9.495px;line-height:11.869px;color:#474747;font-weight:400;white-space:nowrap;;transform:scaleX(0.9479);text-rendering:geometricPrecision;transform-origin:0 0">Продажи</div>
<svg style="position:absolute;left:13.75px;top:638.8px" width="10" height="11" viewBox="0 0 10 11"><path d="M1 3.5H9L9.5 11H.5Z" fill="#4a4a4a"/><path d="M3 4V2A2 1.6 0 0 1 7 2V4" fill="none" stroke="#4a4a4a" stroke-width="1.2"/></svg>
<div style="position:absolute;left:34.5px;top:663.18px;font-size:9.495px;line-height:11.869px;color:#474747;font-weight:400;white-space:nowrap;;transform:scaleX(0.9479);text-rendering:geometricPrecision;transform-origin:0 0">Покупки</div>
<svg style="position:absolute;left:13.75px;top:663.7px" width="11" height="10" viewBox="0 0 11 10"><path d="M0 .8H2L3 6.5H9.5L10.5 2.2H2.5" fill="#4a4a4a" stroke="#4a4a4a" stroke-width="1"/><circle cx="3.8" cy="8.7" r="1.1" fill="#4a4a4a"/><circle cx="8.5" cy="8.7" r="1.1" fill="#4a4a4a"/></svg>
<div style="position:absolute;left:34.5px;top:687.63px;font-size:9.495px;line-height:11.869px;color:#474747;font-weight:400;white-space:nowrap;;transform:scaleX(0.9479);text-rendering:geometricPrecision;transform-origin:0 0">Склад</div>
<svg style="position:absolute;left:13.75px;top:688.6px" width="10" height="10" viewBox="0 0 10 10"><path d="M0 0H4.5V4H0ZM5.5 0H10V4H5.5ZM0 5H4.5V9H0ZM5.5 5H10V9H5.5Z" fill="#4a4a4a"/><path d="M0 9.6H10" stroke="#4a4a4a" stroke-width=".8"/></svg>
<div style="position:absolute;left:34.5px;top:712.08px;font-size:9.495px;line-height:11.869px;color:#474747;font-weight:400;white-space:nowrap;;transform:scaleX(0.9479);text-rendering:geometricPrecision;transform-origin:0 0">Производство</div>
<svg style="position:absolute;left:13.75px;top:712.6px" width="10" height="10" viewBox="0 0 10 10"><path d="M0 10V3L0 0H2V4L5 2.5V5L10 2.5V10Z" fill="#4a4a4a"/><rect x="3" y="0" width="1.5" height="2" fill="#4a4a4a"/></svg>
<div style="position:absolute;left:34.5px;top:736.53px;font-size:9.495px;line-height:11.869px;color:#474747;font-weight:400;white-space:nowrap;;transform:scaleX(0.9479);text-rendering:geometricPrecision;transform-origin:0 0">ОС и НМА</div>
<svg style="position:absolute;left:13.75px;top:738.0px" width="11" height="8" viewBox="0 0 11 8"><path d="M0 0H7V6H0ZM7.5 2H9.5L11 4V6H7.5Z" fill="#4a4a4a"/><circle cx="2.3" cy="6.8" r="1.2" fill="#4a4a4a"/><circle cx="8.8" cy="6.8" r="1.2" fill="#4a4a4a"/></svg>
<div style="position:absolute;left:34.5px;top:760.98px;font-size:9.495px;line-height:11.869px;color:#474747;font-weight:400;white-space:nowrap;;transform:scaleX(0.9479);text-rendering:geometricPrecision;transform-origin:0 0">Зарплата и кадры</div>
<svg style="position:absolute;left:13.75px;top:761.5px" width="10" height="10" viewBox="0 0 10 10"><circle cx="5" cy="2.8" r="2.6" fill="#4a4a4a"/><path d="M0.5 10C.5 6.8 2.5 6 5 6S9.5 6.8 9.5 10Z" fill="#4a4a4a"/></svg>
<div style="position:absolute;left:34.5px;top:785.43px;font-size:9.495px;line-height:11.869px;color:#474747;font-weight:400;white-space:nowrap;;transform:scaleX(0.9479);text-rendering:geometricPrecision;transform-origin:0 0">Операции</div>
<svg style="position:absolute;left:13.75px;top:785.9px" width="10" height="10" viewBox="0 0 10 10"><text x="0" y="4.5" font-size="5" font-family="Liberation Sans" fill="#4a4a4a" font-weight="700">Дт</text><text x="3.5" y="9.5" font-size="5" font-family="Liberation Sans" fill="#4a4a4a" font-weight="700">Кт</text></svg>
<div style="position:absolute;left:34.5px;top:809.88px;font-size:9.495px;line-height:11.869px;color:#474747;font-weight:400;white-space:nowrap;;transform:scaleX(0.9479);text-rendering:geometricPrecision;transform-origin:0 0">Отчеты</div>
<svg style="position:absolute;left:13.75px;top:810.9px" width="10" height="9" viewBox="0 0 10 9"><path d="M0.5 3H2.5V8H0.5ZM3.5 5H5.5V8H3.5ZM6.5 1H8.5V8H6.5Z" fill="#4a4a4a"/><path d="M0 8.6H10" stroke="#4a4a4a" stroke-width="1"/></svg>
<div style="position:absolute;left:34.5px;top:834.33px;font-size:9.495px;line-height:11.869px;color:#474747;font-weight:400;white-space:nowrap;;transform:scaleX(0.9479);text-rendering:geometricPrecision;transform-origin:0 0">Справочники</div>
<svg style="position:absolute;left:13.75px;top:834.3px" width="10" height="11" viewBox="0 0 10 11"><path d="M0 2H7V11H0Z" fill="#4a4a4a"/><path d="M2 1.5V.5H9V9H7.5" fill="none" stroke="#4a4a4a" stroke-width="1"/></svg>
<div style="position:absolute;left:34.5px;top:858.78px;font-size:9.495px;line-height:11.869px;color:#474747;font-weight:400;white-space:nowrap;;transform:scaleX(0.9479);text-rendering:geometricPrecision;transform-origin:0 0">Администрирование</div>
<svg style="position:absolute;left:13.75px;top:858.8px" width="11" height="11" viewBox="0 0 11 11"><g transform="translate(5.5 5.5)"><path d="M-1 -5.3H1L1.3 -3.6L2.6 -3L4 -4L5 -2.6L3.8 -1.4L4 0L5.4 1L4.6 2.6L3 2.4L2.2 3.6L2.4 5.2L.8 5.4L0 4L-1.4 4L-2.4 5.2L-3.8 4.4L-3.4 2.8L-4.2 1.8L-5.4 1.2L-5.2 -.6L-3.8 -1L-3.8 -2.6L-4.6 -3.8L-3.4 -4.8L-2 -3.8L-1.4 -4Z" fill="#4a4a4a"/><circle r="1.8" fill="#fbea9b"/></g></svg>
<div style="position:absolute;left:141px;top:564px;width:51px;height:17px;border:1px solid #c4c4c4;border-radius:2px;background:linear-gradient(#ffffff,#f1f1f1);box-shadow:0 1px 1px rgba(0,0,0,.12);box-sizing:border-box;"></div>
<div style="position:absolute;left:166px;top:565px;width:2px;height:15px;background:#d0d0d0"></div>
<svg style="position:absolute;left:148.25px;top:568.75px" width="11" height="8" viewBox="0 0 11 8"><path d="M0.5 4L4.5 0.5V2.8H10V5.2H4.5V7.5Z" fill="#555"/></svg>
<svg style="position:absolute;left:173.5px;top:568.75px" width="11" height="8" viewBox="0 0 11 8"><path d="M10.5 4L6.5 0.5V2.8H1V5.2H6.5V7.5Z" fill="#c9c9c9"/></svg>
<svg style="position:absolute;left:200.5px;top:566.5px" width="12" height="12" viewBox="0 0 11 11"><path d="M5.5 .8L6.9 4.1L10.4 4.3L7.7 6.6L8.6 10L5.5 8.1L2.4 10L3.3 6.6L.6 4.3L4.1 4.1Z" fill="none" stroke="#d5d5d5" stroke-width="1" stroke-linejoin="round"/></svg>
<div style="position:absolute;left:218.75px;top:564.39px;font-size:13.293px;line-height:16.616px;color:#3d3d3d;font-weight:400;white-space:nowrap;;transform:scaleX(0.9479);text-rendering:geometricPrecision;transform-origin:0 0">Цифровое оборудование связи (Номенклатура)</div>
<svg style="position:absolute;left:536.25px;top:567px" width="11" height="11" viewBox="0 0 11 11"><g fill="none" stroke="#aaa" stroke-width="1.1"><path d="M4.6 3.2L6.4 1.4A2 2 0 0 1 9.6 4.6L7.8 6.4"/><path d="M6.4 7.8L4.6 9.6A2 2 0 0 1 1.4 6.4L3.2 4.6"/><path d="M3.8 7.2L7.2 3.8"/></g></svg>
<svg style="position:absolute;left:558.75px;top:568px" width="11" height="11" viewBox="0 0 11 11"><g fill="none" stroke="#666" stroke-width="1"><path d="M3 2.5V.5H10.5V6.5H8.5"/><path d="M.5 2.5H8.5V8.5H4L2 10.3V8.5H.5Z"/></g></svg>
<div style="position:absolute;left:574.25px;top:568.08px;font-size:9.495px;line-height:11.869px;color:#4a4a4a;font-weight:400;white-space:nowrap;;transform:scaleX(0.9479);text-rendering:geometricPrecision;transform-origin:0 0">Обсуждение</div>
<svg style="position:absolute;left:646px;top:567.5px" width="3" height="9" viewBox="0 0 3 9"><circle cx="1.5" cy="1.2" r="1" fill="#666"/><circle cx="1.5" cy="4.5" r="1" fill="#666"/><circle cx="1.5" cy="7.8" r="1" fill="#666"/></svg>
<svg style="position:absolute;left:664.25px;top:568.25px" width="8.5" height="8.5" viewBox="0 0 8.5 8.5"><path d="M1 1L7.5 7.5M7.5 1L1 7.5" stroke="#888" stroke-width="1"/></svg>
<div style="position:absolute;left:141px;top:586px;width:55px;height:19px;background:#efefef;border-radius:2px"></div>
<div style="position:absolute;left:148.75px;top:590.78px;font-size:9.495px;line-height:11.869px;color:#575757;font-weight:400;white-space:nowrap;;transform:scaleX(0.9479);text-rendering:geometricPrecision;transform-origin:0 0">Основное</div>
<div style="position:absolute;left:203.75px;top:590.53px;font-size:9.495px;line-height:11.869px;color:#3a64b0;font-weight:400;white-space:nowrap;text-decoration:underline dotted #9ab0dc;text-underline-offset:2px;transform:scaleX(0.9479);text-rendering:geometricPrecision;transform-origin:0 0">Правила определения счетов учета</div>
<div style="position:absolute;left:367.75px;top:590.53px;font-size:9.495px;line-height:11.869px;color:#3a64b0;font-weight:400;white-space:nowrap;text-decoration:underline dotted #9ab0dc;text-underline-offset:2px;transform:scaleX(0.9479);text-rendering:geometricPrecision;transform-origin:0 0">Спецификации</div>
<div style="position:absolute;left:445.25px;top:590.53px;font-size:9.495px;line-height:11.869px;color:#3a64b0;font-weight:400;white-space:nowrap;text-decoration:underline dotted #9ab0dc;text-underline-offset:2px;transform:scaleX(0.9479);text-rendering:geometricPrecision;transform-origin:0 0">Назначения использования</div>
<div style="position:absolute;left:574.5px;top:590.53px;font-size:9.495px;line-height:11.869px;color:#3a64b0;font-weight:400;white-space:nowrap;text-decoration:underline dotted #9ab0dc;text-underline-offset:2px;transform:scaleX(0.9479);text-rendering:geometricPrecision;transform-origin:0 0">Еще...</div>
<svg style="position:absolute;left:605.5px;top:595px" width="6" height="4" viewBox="0 0 6 4"><path d="M0 0H6L3 3.5Z" fill="#3a64b0"/></svg>
<div style="position:absolute;left:141px;top:614px;width:108px;height:18px;border:1px solid #d8b800;border-radius:2px;background:linear-gradient(#ffe33a,#f5d200);box-shadow:0 1px 1px rgba(0,0,0,.2);box-sizing:border-box;"></div>
<div style="position:absolute;left:-5.125px;width:400px;text-align:center;top:618.68px;font-size:9.495px;line-height:11.869px;color:#3d3d3d;font-weight:700;white-space:nowrap;;transform:scaleX(0.9479);text-rendering:geometricPrecision;transform-origin:50% 0">Записать и закрыть</div>
<div style="position:absolute;left:255px;top:614px;width:56px;height:18px;border:1px solid #c4c4c4;border-radius:2px;background:linear-gradient(#ffffff,#f1f1f1);box-shadow:0 1px 1px rgba(0,0,0,.18);box-sizing:border-box;"></div>
<div style="position:absolute;left:83.125px;width:400px;text-align:center;top:618.68px;font-size:9.495px;line-height:11.869px;color:#4d4d4d;font-weight:400;white-space:nowrap;;transform:scaleX(0.9479);text-rendering:geometricPrecision;transform-origin:50% 0">Записать</div>
<div style="position:absolute;left:325px;top:614px;width:62px;height:18px;border:1px solid #c4c4c4;border-radius:2px;background:linear-gradient(#ffffff,#f1f1f1);box-shadow:0 1px 1px rgba(0,0,0,.18);box-sizing:border-box;"></div>
<svg style="position:absolute;left:377.75px;top:622.95px" width="4" height="3" viewBox="0 0 4 3"><path d="M0 0H4L2 2.5Z" fill="#555"/></svg>
<svg style="position:absolute;left:330.3px;top:619.3px" width="10" height="9" viewBox="0 0 10 9"><path d="M2.5 0H7.5V2.3H2.5Z" fill="#4b6d98"/><path d="M0.5 2.8H9.5Q10 2.8 10 3.3V7H8V5.5H2V7H0V3.3Q0 2.8 .5 2.8Z" fill="#4b6d98"/><path d="M2.5 5.8H7.5V8.6H2.5Z" fill="#fff" stroke="#4b6d98" stroke-width=".9"/></svg>
<div style="position:absolute;left:344.5px;top:618.08px;font-size:9.495px;line-height:11.869px;color:#4d4d4d;font-weight:400;white-space:nowrap;;transform:scaleX(0.9479);text-rendering:geometricPrecision;transform-origin:0 0">Печать</div>
<div style="position:absolute;left:602px;top:614px;width:41px;height:18px;border:1px solid #c4c4c4;border-radius:2px;background:linear-gradient(#ffffff,#f1f1f1);box-shadow:0 1px 1px rgba(0,0,0,.18);box-sizing:border-box;"></div>
<div style="position:absolute;left:418.5px;width:400px;text-align:center;top:618.68px;font-size:9.495px;line-height:11.869px;color:#4d4d4d;font-weight:400;white-space:nowrap;;transform:scaleX(0.9479);text-rendering:geometricPrecision;transform-origin:50% 0">Еще</div>
<svg style="position:absolute;left:633.75px;top:622.95px" width="4" height="3" viewBox="0 0 4 3"><path d="M0 0H4L2 2.5Z" fill="#555"/></svg>
<div style="position:absolute;left:649px;top:614px;width:20px;height:18px;border:1px solid #c4c4c4;border-radius:2px;background:linear-gradient(#ffffff,#f1f1f1);box-shadow:0 1px 1px rgba(0,0,0,.18);box-sizing:border-box;"></div>
<div style="position:absolute;left:458.75px;width:400px;text-align:center;top:618.68px;font-size:9.495px;line-height:11.869px;color:#3d3d3d;font-weight:700;white-space:nowrap;;transform:scaleX(0.9479);text-rendering:geometricPrecision;transform-origin:50% 0">?</div>
<svg style="position:absolute;left:676px;top:643.5px" width="5" height="4" viewBox="0 0 5 4"><path d="M0 3.5H5L2.5 0Z" fill="#bbb"/></svg>
<div style="position:absolute;left:676px;top:654px;width:5px;height:326px;background:#d6d6d6;border-radius:2.5px"></div>
<div style="position:absolute;left:676px;top:654px;width:5px;height:310px;background:#a3a3a3;border-radius:2.5px"></div>
<svg style="position:absolute;left:676px;top:986px" width="5" height="4" viewBox="0 0 5 4"><path d="M0 0H5L2.5 3.5Z" fill="#bbb"/></svg>
<div style="position:absolute;left:141px;top:642.28px;font-size:9.495px;line-height:11.869px;color:#575757;font-weight:400;white-space:nowrap;;transform:scaleX(0.9479);text-rendering:geometricPrecision;transform-origin:0 0">Вид номенклатуры:</div>
<div style="position:absolute;left:250px;top:637px;width:280px;height:21px;border:1px solid #f4c842;border-radius:2px;background:#fff;box-sizing:border-box;"></div>
<div style="position:absolute;left:252.95px;top:642.45px;font-size:9.495px;line-height:11.869px;color:#404040;font-weight:400;white-space:nowrap;;transform:scaleX(0.9479);text-rendering:geometricPrecision;transform-origin:0 0">Оборудование (объекты основных средств)</div>
<div style="position:absolute;left:499px;top:638px;width:2px;height:19px;background:#c8c8c8"></div>
<svg style="position:absolute;left:505.0px;top:646.425px" width="4" height="3" viewBox="0 0 4 3"><path d="M0 0H4L2 2.4Z" fill="#555"/></svg>
<div style="position:absolute;left:513px;top:638px;width:2px;height:19px;background:#c8c8c8"></div>
<svg style="position:absolute;left:518.625px;top:643.875px" width="7" height="7" viewBox="0 0 7 7"><path d="M3 .5H6.5V4H3Z M.5 2.5V6.5H4.5" fill="none" stroke="#666" stroke-width="1"/></svg>
<div style="position:absolute;left:247px;top:637px;width:194px;height:21px;border:2px solid #ee4040;box-sizing:border-box"></div>
<div style="position:absolute;left:141px;top:665.58px;font-size:9.495px;line-height:11.869px;color:#575757;font-weight:400;white-space:nowrap;;transform:scaleX(0.9479);text-rendering:geometricPrecision;transform-origin:0 0">Наименование:</div>
<div style="position:absolute;left:250px;top:662px;width:279px;height:17px;border:1px solid #bdbdbd;border-radius:2px;background:#fff;box-sizing:border-box;"></div>
<div style="position:absolute;left:252.95px;top:665.58px;font-size:9.495px;line-height:11.869px;color:#404040;font-weight:400;white-space:nowrap;;transform:scaleX(0.9479);text-rendering:geometricPrecision;transform-origin:0 0">Цифровое оборудование связи</div>
<div style="position:absolute;left:141px;top:686.28px;font-size:9.495px;line-height:11.869px;color:#575757;font-weight:400;white-space:nowrap;;transform:scaleX(0.9479);text-rendering:geometricPrecision;transform-origin:0 0">Полное наименование:</div>
<div style="position:absolute;left:250px;top:685px;width:279px;height:38px;border:1px solid #bdbdbd;border-radius:2px;background:#fff;box-sizing:border-box;"></div>
<div style="position:absolute;left:253px;top:688.08px;font-size:9.495px;line-height:11.869px;color:#3d3d3d;font-weight:400;white-space:nowrap;;transform:scaleX(0.9479);text-rendering:geometricPrecision;transform-origin:0 0">Цифровое оборудование связи (искусственный интеллект)</div>
<div style="position:absolute;left:141px;top:732.28px;font-size:9.495px;line-height:11.869px;color:#575757;font-weight:400;white-space:nowrap;;transform:scaleX(0.9479);text-rendering:geometricPrecision;transform-origin:0 0">Маркировка и контроль:</div>
<div style="position:absolute;left:250px;top:728px;width:279px;height:18px;border:1px solid #bdbdbd;border-radius:2px;background:#fff;box-sizing:border-box;"></div>
<div style="position:absolute;left:252.95px;top:732.08px;font-size:9.495px;line-height:11.869px;color:#404040;font-weight:400;white-space:nowrap;;transform:scaleX(0.9479);text-rendering:geometricPrecision;transform-origin:0 0">Нет</div>
<div style="position:absolute;left:513px;top:729px;width:2px;height:16px;background:#c8c8c8"></div>
<svg style="position:absolute;left:519.5px;top:736.05px" width="4" height="3" viewBox="0 0 4 3"><path d="M0 0H4L2 2.4Z" fill="#555"/></svg>
<div style="position:absolute;left:141px;top:754.78px;font-size:9.495px;line-height:11.869px;color:#575757;font-weight:400;white-space:nowrap;;transform:scaleX(0.9479);text-rendering:geometricPrecision;transform-origin:0 0">Артикул:</div>
<div style="position:absolute;left:250px;top:752px;width:177px;height:16px;border:1px solid #bdbdbd;border-radius:2px;background:#fff;box-sizing:border-box;"></div>
<div style="position:absolute;left:431.25px;top:755.49px;font-size:8.757px;line-height:10.946px;color:#3a8fd0;font-weight:700;white-space:nowrap;;transform:scaleX(0.9479);text-rendering:geometricPrecision;transform-origin:0 0">?</div>
<div style="position:absolute;left:141px;top:778.03px;font-size:9.495px;line-height:11.869px;color:#575757;font-weight:400;white-space:nowrap;;transform:scaleX(0.9479);text-rendering:geometricPrecision;transform-origin:0 0">Входит в группу:</div>
<div style="position:absolute;left:250px;top:775px;width:278px;height:17px;border:1px solid #bdbdbd;border-radius:2px;background:#fff;box-sizing:border-box;"></div>
<div style="position:absolute;left:499px;top:776px;width:2px;height:15px;background:#c8c8c8"></div>
<svg style="position:absolute;left:504.875px;top:782.675px" width="4" height="3" viewBox="0 0 4 3"><path d="M0 0H4L2 2.4Z" fill="#555"/></svg>
<div style="position:absolute;left:513px;top:776px;width:1px;height:15px;background:#c8c8c8"></div>
<svg style="position:absolute;left:517.625px;top:780.125px" width="7" height="7" viewBox="0 0 7 7"><path d="M3 .5H6.5V4H3Z M.5 2.5V6.5H4.5" fill="none" stroke="#666" stroke-width="1"/></svg>
<div style="position:absolute;left:141px;top:801.28px;font-size:9.495px;line-height:11.869px;color:#575757;font-weight:400;white-space:nowrap;;transform:scaleX(0.9479);text-rendering:geometricPrecision;transform-origin:0 0">Единица:</div>
<div style="position:absolute;left:250px;top:798px;width:138px;height:17px;border:1px solid #bdbdbd;border-radius:2px;background:#fff;box-sizing:border-box;"></div>
<div style="position:absolute;left:252.95px;top:801.45px;font-size:9.495px;line-height:11.869px;color:#404040;font-weight:400;white-space:nowrap;;transform:scaleX(0.9479);text-rendering:geometricPrecision;transform-origin:0 0">шт</div>
<div style="position:absolute;left:358px;top:799px;width:1px;height:15px;background:#c8c8c8"></div>
<svg style="position:absolute;left:363.875px;top:805.425px" width="4" height="3" viewBox="0 0 4 3"><path d="M0 0H4L2 2.4Z" fill="#555"/></svg>
<div style="position:absolute;left:372px;top:799px;width:2px;height:15px;background:#c8c8c8"></div>
<svg style="position:absolute;left:377.0px;top:802.875px" width="7" height="7" viewBox="0 0 7 7"><path d="M3 .5H6.5V4H3Z M.5 2.5V6.5H4.5" fill="none" stroke="#666" stroke-width="1"/></svg>
<div style="position:absolute;left:394.5px;top:801.28px;font-size:9.495px;line-height:11.869px;color:#8a8a8a;font-weight:400;white-space:nowrap;;transform:scaleX(0.9479);text-rendering:geometricPrecision;transform-origin:0 0">Штука</div>
<div style="position:absolute;left:141px;top:824.28px;font-size:9.495px;line-height:11.869px;color:#575757;font-weight:400;white-space:nowrap;;transform:scaleX(0.9479);text-rendering:geometricPrecision;transform-origin:0 0">% НДС:</div>
<div style="position:absolute;left:250px;top:821px;width:76px;height:17px;border:1px solid #bdbdbd;border-radius:2px;background:#fff;box-sizing:border-box;"></div>
<div style="position:absolute;left:252.95px;top:824.45px;font-size:9.495px;line-height:11.869px;color:#404040;font-weight:400;white-space:nowrap;;transform:scaleX(0.9479);text-rendering:geometricPrecision;transform-origin:0 0">20%</div>
<div style="position:absolute;left:311px;top:822px;width:1px;height:15px;background:#c8c8c8"></div>
<svg style="position:absolute;left:316.875px;top:828.425px" width="4" height="3" viewBox="0 0 4 3"><path d="M0 0H4L2 2.4Z" fill="#555"/></svg>
<div style="position:absolute;left:333.5px;top:824.28px;font-size:9.495px;line-height:11.869px;color:#3a64b0;font-weight:400;white-space:nowrap;text-decoration:underline;transform:scaleX(0.9479);text-rendering:geometricPrecision;transform-origin:0 0">История</div>
<div style="position:absolute;left:141px;top:847.28px;font-size:9.495px;line-height:11.869px;color:#575757;font-weight:400;white-space:nowrap;;transform:scaleX(0.9479);text-rendering:geometricPrecision;transform-origin:0 0">Цена продажи:</div>
<div style="position:absolute;left:250px;top:844px;width:102px;height:17px;border:1px solid #d0d0d0;border-radius:2px;background:#fff;box-sizing:border-box;"></div>
<div style="position:absolute;right:676px;text-align:right;top:847.70px;font-size:9.495px;line-height:11.869px;color:#404040;font-weight:400;white-space:nowrap;;transform:scaleX(0.9479);text-rendering:geometricPrecision;transform-origin:100% 0">0,00</div>
<div style="position:absolute;left:358.75px;top:847.28px;font-size:9.495px;line-height:11.869px;color:#575757;font-weight:400;white-space:nowrap;;transform:scaleX(0.9479);text-rendering:geometricPrecision;transform-origin:0 0">руб.</div>
<div style="position:absolute;left:383.75px;top:847.99px;font-size:8.757px;line-height:10.946px;color:#3a8fd0;font-weight:700;white-space:nowrap;;transform:scaleX(0.9479);text-rendering:geometricPrecision;transform-origin:0 0">?</div>
<div style="position:absolute;left:141px;top:870.58px;font-size:9.495px;line-height:11.869px;color:#575757;font-weight:400;white-space:nowrap;;transform:scaleX(0.9479);text-rendering:geometricPrecision;transform-origin:0 0">Производитель:</div>
<div style="position:absolute;left:250px;top:867px;width:278px;height:17px;border:1px solid #bdbdbd;border-radius:2px;background:#fff;box-sizing:border-box;"></div>
<div style="position:absolute;left:499px;top:868px;width:2px;height:15px;background:#c8c8c8"></div>
<svg style="position:absolute;left:504.875px;top:874.8px" width="4" height="3" viewBox="0 0 4 3"><path d="M0 0H4L2 2.4Z" fill="#555"/></svg>
<div style="position:absolute;left:513px;top:868px;width:1px;height:15px;background:#c8c8c8"></div>
<svg style="position:absolute;left:517.75px;top:872.25px" width="7" height="7" viewBox="0 0 7 7"><path d="M3 .5H6.5V4H3Z M.5 2.5V6.5H4.5" fill="none" stroke="#666" stroke-width="1"/></svg>
<div style="position:absolute;left:141px;top:893.58px;font-size:9.495px;line-height:11.869px;color:#575757;font-weight:400;white-space:nowrap;;transform:scaleX(0.9479);text-rendering:geometricPrecision;transform-origin:0 0">Комментарий:</div>
<div style="position:absolute;left:250px;top:890px;width:278px;height:17px;border:1px solid #bdbdbd;border-radius:2px;background:#fff;box-sizing:border-box;"></div>
<div style="position:absolute;left:252.95px;top:893.83px;font-size:9.495px;line-height:11.869px;color:#404040;font-weight:400;white-space:nowrap;;transform:scaleX(0.9479);text-rendering:geometricPrecision;transform-origin:0 0">Включено в реестр российской радиоэлектронной продукции</div>
<svg style="position:absolute;left:144.8px;top:914.3px" width="6" height="9" viewBox="0 0 6 9"><path d="M.8 .8L4.6 4.5L.8 8.2" fill="none" stroke="#2f9a5a" stroke-width="1.2"/></svg>
<div style="position:absolute;left:156px;top:914.28px;font-size:9.495px;line-height:11.869px;color:#2f9a5a;font-weight:400;white-space:nowrap;;transform:scaleX(0.9479);text-rendering:geometricPrecision;transform-origin:0 0">Описание</div>
<svg style="position:absolute;left:144.8px;top:931.8px" width="6" height="9" viewBox="0 0 6 9"><path d="M.8 .8L4.6 4.5L.8 8.2" fill="none" stroke="#2f9a5a" stroke-width="1.2"/></svg>
<div style="position:absolute;left:156px;top:931.78px;font-size:9.495px;line-height:11.869px;color:#2f9a5a;font-weight:400;white-space:nowrap;;transform:scaleX(0.9479);text-rendering:geometricPrecision;transform-origin:0 0">Производство</div>
<svg style="position:absolute;left:144.8px;top:949.8px" width="6" height="9" viewBox="0 0 6 9"><path d="M.8 .8L4.6 4.5L.8 8.2" fill="none" stroke="#2f9a5a" stroke-width="1.2"/></svg>
<div style="position:absolute;left:156px;top:949.78px;font-size:9.495px;line-height:11.869px;color:#2f9a5a;font-weight:400;white-space:nowrap;;transform:scaleX(0.9479);text-rendering:geometricPrecision;transform-origin:0 0">Малоценное оборудование и запасы, выданные сотрудникам</div>
<svg style="position:absolute;left:144.8px;top:967.3px" width="6" height="9" viewBox="0 0 6 9"><path d="M.8 .8L4.6 4.5L.8 8.2" fill="none" stroke="#2f9a5a" stroke-width="1.2"/></svg>
<div style="position:absolute;left:156px;top:967.28px;font-size:9.495px;line-height:11.869px;color:#2f9a5a;font-weight:400;white-space:nowrap;;transform:scaleX(0.9479);text-rendering:geometricPrecision;transform-origin:0 0">Алкогольная продукция</div>
<svg style="position:absolute;left:144.8px;top:984.8px" width="6" height="9" viewBox="0 0 6 9"><path d="M.8 .8L4.6 4.5L.8 8.2" fill="none" stroke="#2f9a5a" stroke-width="1.2"/></svg>
<div style="position:absolute;left:156px;top:984.78px;font-size:9.495px;line-height:11.869px;color:#2f9a5a;font-weight:400;white-space:nowrap;;transform:scaleX(0.9479);text-rendering:geometricPrecision;transform-origin:0 0">Импортный товар</div>
<div style="position:absolute;left:423px;top:950.49px;font-size:8.757px;line-height:10.946px;color:#3a8fd0;font-weight:700;white-space:nowrap;;transform:scaleX(0.9479);text-rendering:geometricPrecision;transform-origin:0 0">?</div>
</body></html>
